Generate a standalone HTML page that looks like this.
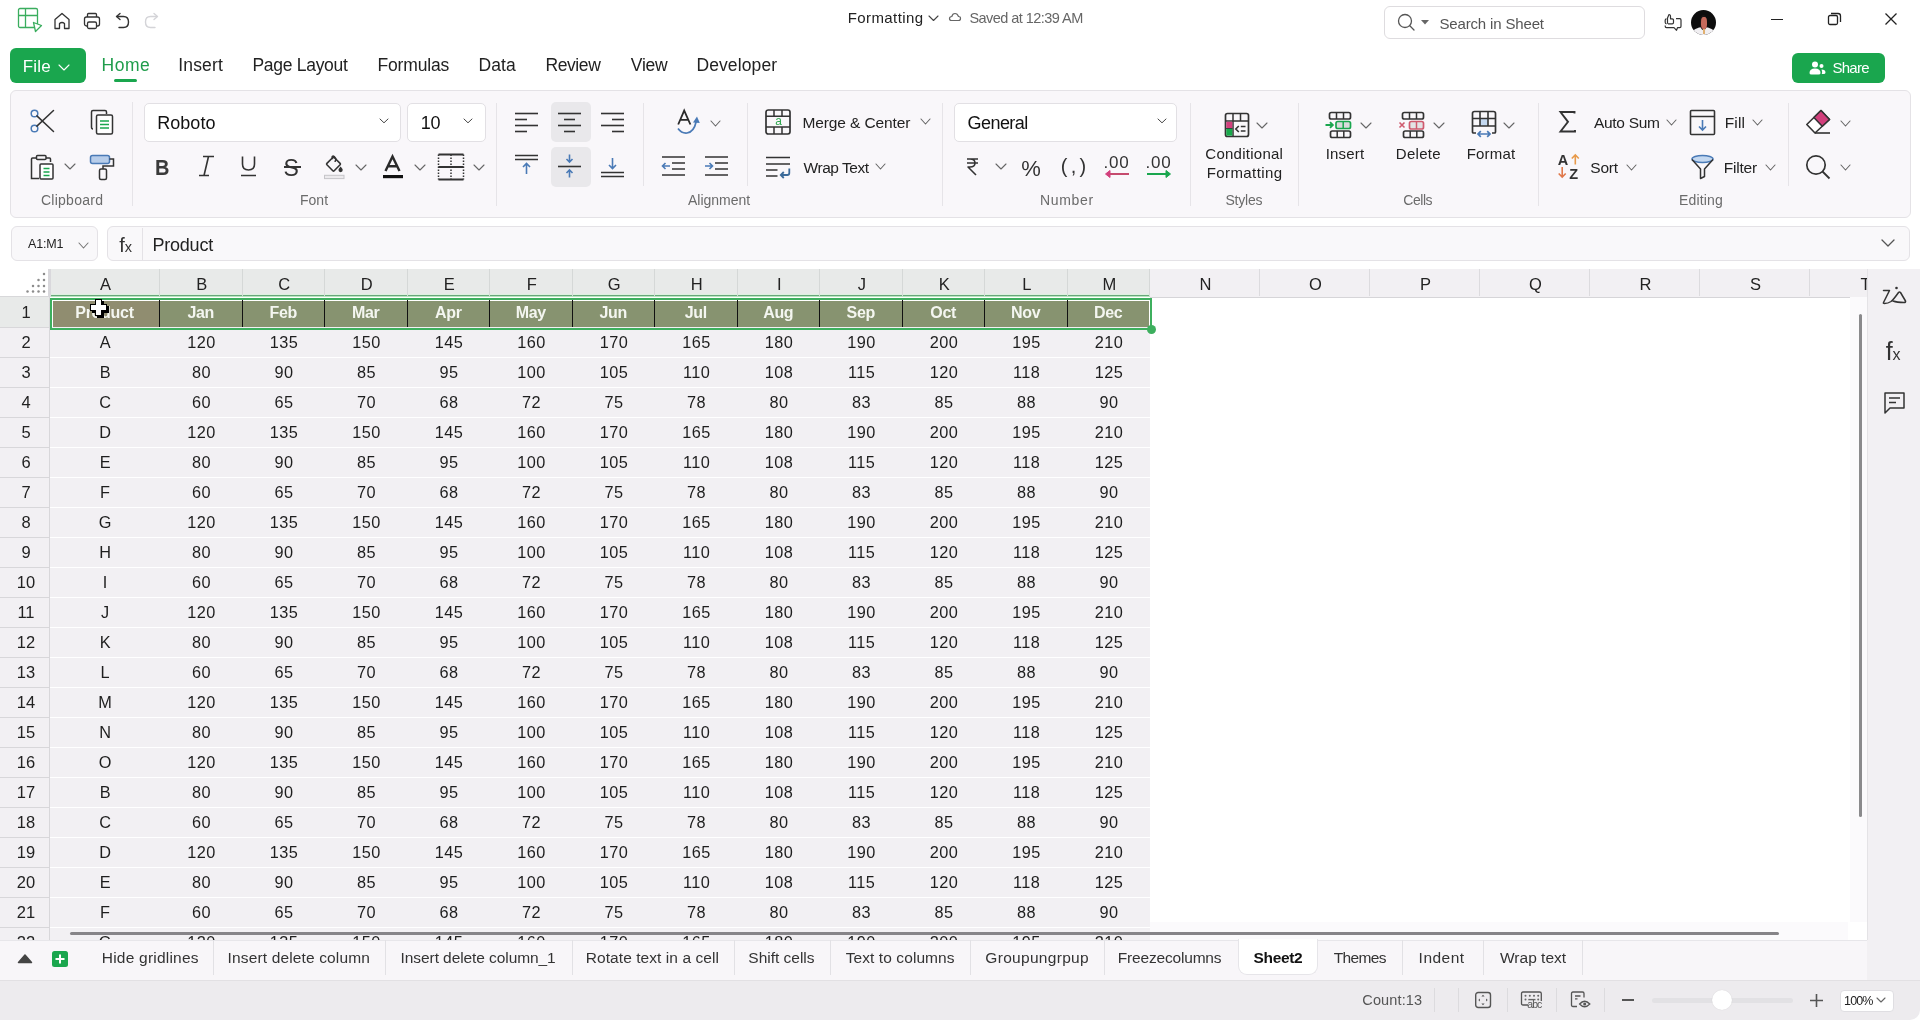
<!DOCTYPE html><html><head><meta charset="utf-8"><style>
html,body{margin:0;padding:0;}
body{width:1920px;height:1020px;overflow:hidden;position:relative;background:#fff;font-family:"Liberation Sans",sans-serif;}
.t{position:absolute;white-space:nowrap;line-height:normal;font-family:"Liberation Sans",sans-serif;}
svg{overflow:visible}
</style></head><body><div style="position:absolute;left:0;top:0;width:1920px;height:1020px;overflow:hidden;will-change:transform;background:#fff">

<svg style="position:absolute;left:17px;top:7px" width="26" height="26" viewBox="0 0 26 26" fill="none"><rect x="1.5" y="1.5" width="19" height="19" rx="1.5" stroke="#3aad5e" stroke-width="1.3"/>
<path d="M1.5 8.5 H20.5 M8.5 1.5 V20.5" stroke="#3aad5e" stroke-width="1.3"/>
<path d="M16.5 15.5 L24.5 18.5 L18.5 24.5 Z" fill="#fff" stroke="#3aad5e" stroke-width="1.3" stroke-linejoin="round"/></svg>
<svg style="position:absolute;left:53px;top:12px" width="18" height="18" viewBox="0 0 18 18" fill="none"><path d="M2 16.5 V7.5 L9 1.5 L16 7.5 V16.5 H11.5 V11.5 Q9 9.5 6.5 11.5 V16.5 Z" stroke="#333333" stroke-width="1.3" stroke-linejoin="round"/></svg>
<svg style="position:absolute;left:83px;top:12px" width="18" height="18" viewBox="0 0 18 18" fill="none"><path d="M4.5 5 V2.5 Q4.5 1.5 5.5 1.5 H12.5 Q13.5 1.5 13.5 2.5 V5" stroke="#333333" stroke-width="1.3"/><rect x="1.5" y="5" width="15" height="9" rx="2" stroke="#333333" stroke-width="1.3"/><rect x="4.5" y="10" width="9" height="6.5" rx="1.5" fill="#fff" stroke="#333333" stroke-width="1.3"/></svg>
<svg style="position:absolute;left:114px;top:12px" width="17" height="18" viewBox="0 0 17 18" fill="none"><path d="M3 4.5 H9.5 Q14.5 4.5 14.5 10 Q14.5 15.5 9.5 15.5 H5" stroke="#333333" stroke-width="1.4" stroke-linecap="round"/><path d="M6 1.5 L2.5 4.5 L6 7.5" stroke="#333333" stroke-width="1.4" stroke-linecap="round" stroke-linejoin="round"/></svg>
<svg style="position:absolute;left:143px;top:12px" width="17" height="18" viewBox="0 0 17 18" fill="none"><path d="M14 4.5 H7.5 Q2.5 4.5 2.5 10 Q2.5 15.5 7.5 15.5 H12" stroke="#d4d4d8" stroke-width="1.4" stroke-linecap="round"/><path d="M11 1.5 L14.5 4.5 L11 7.5" stroke="#d4d4d8" stroke-width="1.4" stroke-linecap="round" stroke-linejoin="round"/></svg>
<div class="t" style="left:847.80px;top:9.00px;font-size:15px;color:#222;letter-spacing:0.389px;">Formatting</div>
<svg style="position:absolute;left:928.0px;top:15.25px" width="11" height="6.5" viewBox="0 0 11 6.5" fill="none"><path d="M1 1 L5.5 5.5 L10 1" stroke="#444" stroke-width="1.1" stroke-linecap="round" stroke-linejoin="round"/></svg>
<svg style="position:absolute;left:948px;top:12px" width="14" height="10" viewBox="0 0 14 10" fill="none"><path d="M3.5 8.5 H10.5 Q12.5 8.5 12.5 6.5 Q12.5 4.5 10.5 4.5 Q9.5 1.5 7 1.5 Q4.5 1.5 3.8 4.5 Q1.5 4.7 1.5 6.5 Q1.5 8.5 3.5 8.5 Z" stroke="#666" stroke-width="1.2"/></svg>
<div class="t" style="left:969.40px;top:10.00px;font-size:14.5px;color:#666;letter-spacing:-0.544px;">Saved at 12:39 AM</div>
<div style="position:absolute;left:1383.5px;top:5.5px;width:261px;height:33px;box-sizing:border-box;border:1px solid #dedcdf;border-radius:6px;background:#fff"></div>
<svg style="position:absolute;left:1397px;top:13px" width="19" height="19" viewBox="0 0 19 19" fill="none"><circle cx="8" cy="8" r="6.5" stroke="#555" stroke-width="1.3"/><path d="M12.8 12.8 L17 17" stroke="#555" stroke-width="1.3" stroke-linecap="round"/></svg>
<svg style="position:absolute;left:1420px;top:19px" width="10" height="6" viewBox="0 0 10 6" fill="none"><path d="M1 1 H9 L5 5.5 Z" fill="#666"/></svg>
<div class="t" style="left:1439.40px;top:15.00px;font-size:15px;color:#555;letter-spacing:-0.150px;">Search in Sheet</div>
<svg style="position:absolute;left:1663px;top:12px" width="20" height="21" viewBox="0 0 20 21" fill="none"><path d="M3.5 6.8 Q2.2 6.8 2.2 8.3 V10.3 Q2.2 11.8 3.5 11.8 M5 11.8 H9.2 Q10.5 11.8 10.5 10.5 V8.2 Q10.5 6.8 9.2 6.8 H7.5 V4.5 Q7.5 2.5 6 2.5 L4.5 6 V11.8" stroke="#333333" stroke-width="1.2" stroke-linejoin="round"/><path d="M13 6.7 H16.8 Q18 6.7 18 8 V14.3 Q18 15.7 16.8 15.7 H14.5 L13.5 18.3 L11 15.7 H3.5 Q2.2 15.7 2.2 14.3 V13.5" stroke="#333333" stroke-width="1.2" stroke-linejoin="round"/></svg>
<div style="position:absolute;left:1691px;top:10px;width:25px;height:25px;border-radius:50%;background:#0d0d0d;overflow:hidden">
<div style="position:absolute;left:1px;top:17px;width:23px;height:14px;border-radius:50% 50% 0 0;background:#f1eff2"></div>
<div style="position:absolute;left:9px;top:5px;width:7px;height:15px;border-radius:45%;background:#1a1414"></div>
<div style="position:absolute;left:10px;top:7px;width:6px;height:12px;border-radius:40%;background:#c66a5c"></div>
<div style="position:absolute;left:11.5px;top:19px;width:2px;height:5px;background:#e0b070"></div>
</div>
<div style="position:absolute;left:1771px;top:19px;width:12px;height:1.3px;background:#222"></div>
<svg style="position:absolute;left:1827px;top:12px" width="15" height="15" viewBox="0 0 15 15" fill="none"><rect x="1.5" y="3.5" width="9" height="9" rx="1.5" stroke="#222" stroke-width="1.3"/><path d="M4 1.5 H11 Q13.5 1.5 13.5 4 V10" stroke="#222" stroke-width="1.3"/></svg>
<svg style="position:absolute;left:1884px;top:12px" width="14" height="14" viewBox="0 0 14 14" fill="none"><path d="M1.5 1.5 L12.5 12.5 M12.5 1.5 L1.5 12.5" stroke="#222" stroke-width="1.3"/></svg>
<div style="position:absolute;left:10px;top:48px;width:76px;height:35px;background:#1aa64e;border-radius:6px"></div>
<div class="t" style="left:22.70px;top:57.00px;font-size:17px;color:#fff;letter-spacing:0.233px;">File</div>
<svg style="position:absolute;left:57.5px;top:63.5px" width="12" height="7" viewBox="0 0 12 7" fill="none"><path d="M1 1 L6.0 6 L11 1" stroke="#fff" stroke-width="1.1" stroke-linecap="round" stroke-linejoin="round"/></svg>
<div class="t" style="left:101.60px;top:55.00px;font-size:17.5px;color:#1f9d4b;letter-spacing:0.500px;">Home</div>
<div style="position:absolute;left:114px;top:79px;width:23px;height:3px;background:#1aa64e;border-radius:2px"></div>
<div class="t" style="left:178.20px;top:55.00px;font-size:17.5px;color:#222;letter-spacing:0.180px;">Insert</div>
<div class="t" style="left:252.40px;top:55.00px;font-size:17.5px;color:#222;letter-spacing:-0.280px;">Page Layout</div>
<div class="t" style="left:377.40px;top:55.00px;font-size:17.5px;color:#222;letter-spacing:-0.143px;">Formulas</div>
<div class="t" style="left:478.40px;top:55.00px;font-size:17.5px;color:#222;letter-spacing:0.133px;">Data</div>
<div class="t" style="left:545.40px;top:55.00px;font-size:17.5px;color:#222;letter-spacing:-0.400px;">Review</div>
<div class="t" style="left:630.80px;top:55.00px;font-size:17.5px;color:#222;letter-spacing:-0.233px;">View</div>
<div class="t" style="left:696.40px;top:55.00px;font-size:17.5px;color:#222;letter-spacing:0.113px;">Developer</div>
<div style="position:absolute;left:1792px;top:53px;width:93px;height:30px;background:#1aa64e;border-radius:6px"></div>
<svg style="position:absolute;left:1809px;top:61px" width="18" height="15" viewBox="0 0 18 15" fill="none"><circle cx="6" cy="3.5" r="3" fill="#fff"/><path d="M0.5 12 Q0.5 7.5 6 7.5 Q11.5 7.5 11.5 12 Q11.5 13.5 9.5 13.5 H2.5 Q0.5 13.5 0.5 12 Z" fill="#fff"/><circle cx="12.5" cy="5" r="2" fill="#fff"/><path d="M12.5 8.5 Q16.5 8.5 16.5 11.5 Q16.5 13 14.5 13 H12.8 Q13.5 10.5 12.5 8.5 Z" fill="#fff"/></svg>
<div class="t" style="left:1832.40px;top:59.00px;font-size:15px;color:#fff;letter-spacing:-0.700px;">Share</div>
<div style="position:absolute;left:9.5px;top:90px;width:1901px;height:127.5px;box-sizing:border-box;border:1px solid #e4e2e6;border-radius:6px;background:#f9f7fa"></div>
<div style="position:absolute;left:132px;top:102px;width:1px;height:104px;background:#e6e4e8"></div>
<div style="position:absolute;left:496px;top:103px;width:1px;height:103px;background:#e6e4e8"></div>
<div style="position:absolute;left:643px;top:103px;width:1px;height:83px;background:#e6e4e8"></div>
<div style="position:absolute;left:747px;top:103px;width:1px;height:83px;background:#e6e4e8"></div>
<div style="position:absolute;left:942px;top:103px;width:1px;height:103px;background:#e6e4e8"></div>
<div style="position:absolute;left:1190px;top:103px;width:1px;height:103px;background:#e6e4e8"></div>
<div style="position:absolute;left:1298px;top:103px;width:1px;height:103px;background:#e6e4e8"></div>
<div style="position:absolute;left:1538px;top:103px;width:1px;height:103px;background:#e6e4e8"></div>
<div style="position:absolute;left:1788px;top:103px;width:1px;height:83px;background:#e6e4e8"></div>
<div class="t" style="left:41.00px;top:192.00px;font-size:14px;color:#6b6b6b;letter-spacing:0.250px;">Clipboard</div>
<div class="t" style="left:299.90px;top:192.00px;font-size:14px;color:#6b6b6b;letter-spacing:0.067px;">Font</div>
<div class="t" style="left:688.00px;top:192.00px;font-size:14px;color:#6b6b6b;letter-spacing:-0.025px;">Alignment</div>
<div class="t" style="left:1039.90px;top:192.00px;font-size:14px;color:#6b6b6b;letter-spacing:0.700px;">Number</div>
<div class="t" style="left:1225.40px;top:192.00px;font-size:14px;color:#6b6b6b;letter-spacing:-0.200px;">Styles</div>
<div class="t" style="left:1403.30px;top:192.00px;font-size:14px;color:#6b6b6b;letter-spacing:-0.475px;">Cells</div>
<div class="t" style="left:1678.90px;top:192.00px;font-size:14px;color:#6b6b6b;letter-spacing:0.200px;">Editing</div>
<svg style="position:absolute;left:29px;top:108px" width="26" height="26" viewBox="0 0 26 26" fill="none"><circle cx="5.5" cy="5.5" r="3.3" stroke="#4a7ab6" stroke-width="1.5"/><circle cx="5.5" cy="20.5" r="3.3" stroke="#4a7ab6" stroke-width="1.5"/>
<path d="M7.9 7.9 L24.5 23.5 M7.9 18.1 L24.5 2.5" stroke="#333333" stroke-width="1.5" stroke-linecap="round"/></svg>
<svg style="position:absolute;left:90px;top:109px" width="25" height="27" viewBox="0 0 25 27" fill="none"><path d="M3 20 Q1.5 20 1.5 18 V3 Q1.5 1.5 3 1.5 H15 Q16.5 1.5 16.5 3 V5" stroke="#333333" stroke-width="1.5"/>
<rect x="6.5" y="6" width="16" height="19" rx="1.5" fill="#fff" stroke="#333333" stroke-width="1.5"/>
<path d="M10 12 H19 M10 15.5 H19 M10 19 H19" stroke="#1aa64e" stroke-width="1.5"/></svg>
<svg style="position:absolute;left:30px;top:154px" width="26" height="27" viewBox="0 0 26 27" fill="none"><path d="M7 4 H2.5 Q1.5 4 1.5 5 V24.5 H9 M16 4 H19.5 Q20.5 4 20.5 5 V8" stroke="#333333" stroke-width="1.5"/>
<rect x="6.5" y="1.5" width="9.5" height="4" rx="1" stroke="#333333" stroke-width="1.5"/>
<rect x="10" y="10" width="13" height="15" rx="1" fill="#fff" stroke="#333333" stroke-width="1.5"/>
<path d="M13.5 14.5 H19.5 M13.5 18 H19.5 M13.5 21.5 H19.5" stroke="#1aa64e" stroke-width="1.5"/></svg>
<svg style="position:absolute;left:64.0px;top:163.0px" width="12" height="7" viewBox="0 0 12 7" fill="none"><path d="M1 1 L6.0 6 L11 1" stroke="#666" stroke-width="1.1" stroke-linecap="round" stroke-linejoin="round"/></svg>
<svg style="position:absolute;left:89px;top:154px" width="27" height="27" viewBox="0 0 27 27" fill="none"><rect x="1.5" y="1.5" width="19" height="8" rx="2" fill="#b7cdea" stroke="#4a7ab6" stroke-width="1.5"/>
<path d="M20.5 5 H24.5 V12 H14 V15" stroke="#333333" stroke-width="1.5"/>
<rect x="10.5" y="15" width="7" height="10.5" rx="1.5" stroke="#333333" stroke-width="1.5"/></svg>
<div style="position:absolute;left:143.5px;top:102.5px;width:257px;height:39px;box-sizing:border-box;border:1px solid #e2e0e4;border-radius:5px;background:#fff"></div>
<div class="t" style="left:157.20px;top:113.30px;font-size:18px;color:#111;letter-spacing:0.040px;">Roboto</div>
<svg style="position:absolute;left:379.0px;top:118.3px" width="10" height="5.8" viewBox="0 0 10 5.8" fill="none"><path d="M1 1 L5.0 4.8 L9 1" stroke="#444" stroke-width="1.0" stroke-linecap="round" stroke-linejoin="round"/></svg>
<div style="position:absolute;left:406.5px;top:102.5px;width:79px;height:39px;box-sizing:border-box;border:1px solid #e2e0e4;border-radius:5px;background:#fff"></div>
<div class="t" style="left:420.70px;top:113.30px;font-size:18px;color:#111;letter-spacing:-0.100px;">10</div>
<svg style="position:absolute;left:463.0px;top:118.3px" width="10" height="5.8" viewBox="0 0 10 5.8" fill="none"><path d="M1 1 L5.0 4.8 L9 1" stroke="#444" stroke-width="1.0" stroke-linecap="round" stroke-linejoin="round"/></svg>
<div class="t" style="left:154.60px;top:155.50px;font-size:21.5px;color:#3a3a3a;letter-spacing:0.000px;font-weight:700;transform:scaleX(0.93);transform-origin:0 0;">B</div>
<svg style="position:absolute;left:196px;top:155px" width="21" height="22" viewBox="0 0 21 22" fill="none"><path d="M7 1.5 H18 M3 20.5 H13 M12.5 1.5 L8 20.5" stroke="#333333" stroke-width="1.6"/></svg>
<svg style="position:absolute;left:239px;top:155px" width="21" height="22" viewBox="0 0 21 22" fill="none"><path d="M3.5 1.5 V9 Q3.5 15 9.5 15 Q15.5 15 15.5 9 V1.5 M2 20.5 H17" stroke="#333333" stroke-width="1.6"/></svg>
<div class="t" style="left:283.50px;top:154.50px;font-size:23px;color:#333333;letter-spacing:0.000px;">S</div>
<div style="position:absolute;left:284px;top:166.3px;width:17px;height:1.6px;background:#333333"></div>
<svg style="position:absolute;left:323px;top:152px" width="23" height="28" viewBox="0 0 23 28" fill="none"><path d="M9.8 5.5 Q10.5 4.8 11.2 5.5 L17.1 11.4 Q17.8 12.1 17.1 12.8 L11.2 18.7 Q10.5 19.4 9.8 18.7 L3.9 12.8 Q3.2 12.1 3.9 11.4 Z" stroke="#333333" stroke-width="1.6" stroke-linejoin="round"/>
<path d="M9.6 6.4 Q8.6 4.2 10.2 4 Q11.2 3.9 12.6 6.4 Q13.4 8.4 12.2 9.2" stroke="#333333" stroke-width="1.7" stroke-linecap="round"/>
<path d="M17.6 14.6 Q19.7 17 19.7 18.1 A2.1 2.1 0 0 1 15.5 18.1 Q15.5 17 17.6 14.6 Z" fill="#333333"/>
<rect x="1.5" y="23.3" width="19.5" height="3.3" fill="#eceaed" stroke="#c6c5c9" stroke-width="1"/></svg>
<svg style="position:absolute;left:355.0px;top:163.5px" width="12" height="7" viewBox="0 0 12 7" fill="none"><path d="M1 1 L6.0 6 L11 1" stroke="#666" stroke-width="1.1" stroke-linecap="round" stroke-linejoin="round"/></svg>
<svg style="position:absolute;left:382px;top:151px" width="22" height="29" viewBox="0 0 22 29" fill="none"><path d="M3.5 20 L10.5 5.5 L17.5 20 M6.2 15.3 H14.8" stroke="#2a2a2a" stroke-width="2.4"/><rect x="1" y="24" width="20" height="3.2" fill="#111"/></svg>
<svg style="position:absolute;left:414.0px;top:163.5px" width="12" height="7" viewBox="0 0 12 7" fill="none"><path d="M1 1 L6.0 6 L11 1" stroke="#666" stroke-width="1.1" stroke-linecap="round" stroke-linejoin="round"/></svg>
<svg style="position:absolute;left:437px;top:153px" width="28" height="28" viewBox="0 0 28 28" fill="none"><path d="M1.5 1.5 H26.5 M1.5 14 H26.5 M1.5 26.5 H26.5" stroke="#333333" stroke-width="1.8"/>
<path d="M1.5 1.5 V26.5 M14 1.5 V26.5 M26.5 1.5 V26.5" stroke="#333333" stroke-width="1.5" stroke-dasharray="1.5 1.5"/></svg>
<svg style="position:absolute;left:473.0px;top:163.5px" width="12" height="7" viewBox="0 0 12 7" fill="none"><path d="M1 1 L6.0 6 L11 1" stroke="#666" stroke-width="1.1" stroke-linecap="round" stroke-linejoin="round"/></svg>
<div style="position:absolute;left:550.5px;top:102px;width:40px;height:40px;background:#e9e8eb;border-radius:5px"></div>
<div style="position:absolute;left:550.5px;top:147px;width:40px;height:40px;background:#e9e8eb;border-radius:5px"></div>
<svg style="position:absolute;left:513px;top:109px" width="26" height="24" viewBox="0 0 26 24" fill="none"><path d="M2 4.5 H25" stroke="#333333" stroke-width="1.6"/><path d="M2 10.5 H14" stroke="#333333" stroke-width="1.6"/><path d="M2 16.5 H25" stroke="#333333" stroke-width="1.6"/><path d="M2 22.5 H14" stroke="#333333" stroke-width="1.6"/></svg>
<svg style="position:absolute;left:556px;top:109px" width="26" height="24" viewBox="0 0 26 24" fill="none"><path d="M2 4.5 H25" stroke="#333333" stroke-width="1.6"/><path d="M8 10.5 H19" stroke="#333333" stroke-width="1.6"/><path d="M2 16.5 H25" stroke="#333333" stroke-width="1.6"/><path d="M8 22.5 H19" stroke="#333333" stroke-width="1.6"/></svg>
<svg style="position:absolute;left:599px;top:109px" width="26" height="24" viewBox="0 0 26 24" fill="none"><path d="M2 4.5 H25" stroke="#333333" stroke-width="1.6"/><path d="M13 10.5 H25" stroke="#333333" stroke-width="1.6"/><path d="M2 16.5 H25" stroke="#333333" stroke-width="1.6"/><path d="M13 22.5 H25" stroke="#333333" stroke-width="1.6"/></svg>
<svg style="position:absolute;left:513px;top:153px" width="26" height="26" viewBox="0 0 26 26" fill="none"><path d="M2 2.5 H25 M2 6.5 H25" stroke="#333333" stroke-width="1.6"/><path d="M13.5 21 V10.5 M10 14 L13.5 10.5 L17 14" stroke="#4a7ab6" stroke-width="1.6"/></svg>
<svg style="position:absolute;left:556px;top:153px" width="26" height="26" viewBox="0 0 26 26" fill="none"><path d="M2 13.5 H25" stroke="#333333" stroke-width="1.6"/><path d="M13.5 1.5 V9 M10.5 6 L13.5 9 L16.5 6 M13.5 24.5 V17 M10.5 20 L13.5 17 L16.5 20" stroke="#4a7ab6" stroke-width="1.6"/></svg>
<svg style="position:absolute;left:599px;top:153px" width="26" height="28" viewBox="0 0 26 28" fill="none"><path d="M2 19.5 H25 M2 23.5 H25" stroke="#333333" stroke-width="1.6"/><path d="M13.5 5 V15.5 M10 12 L13.5 15.5 L17 12" stroke="#4a7ab6" stroke-width="1.6"/></svg>
<svg style="position:absolute;left:675px;top:108px" width="26" height="28" viewBox="0 0 26 28" fill="none"><path d="M3.2 16.5 L9.2 2.6 L15.4 16.5 M5.2 11.8 H13.2" stroke="#2a2a2a" stroke-width="1.8"/><path d="M3 20.5 Q6.5 25.5 12 25 Q19 24 21.2 13.5" stroke="#4a7ab6" stroke-width="1.7" fill="none"/><path d="M18 14.5 L22 8.5 L24.8 15 Z" fill="#4a7ab6"/></svg>
<svg style="position:absolute;left:710.0px;top:119.5px" width="11" height="7" viewBox="0 0 11 7" fill="none"><path d="M1 1 L5.5 6 L10 1" stroke="#666" stroke-width="1.1" stroke-linecap="round" stroke-linejoin="round"/></svg>
<svg style="position:absolute;left:660px;top:155px" width="27" height="24" viewBox="0 0 27 24" fill="none"><path d="M2 2 H25 M12 8 H25 M12 14 H25 M2 20 H25" stroke="#333333" stroke-width="1.6"/><path d="M10 11 H2.5 M5.5 8 L2.5 11 L5.5 14" stroke="#4a7ab6" stroke-width="1.6"/></svg>
<svg style="position:absolute;left:703px;top:155px" width="27" height="24" viewBox="0 0 27 24" fill="none"><path d="M2 2 H25 M12 8 H25 M12 14 H25 M2 20 H25" stroke="#333333" stroke-width="1.6"/><path d="M2 11 H9.5 M6.5 8 L9.5 11 L6.5 14" stroke="#4a7ab6" stroke-width="1.6"/></svg>
<svg style="position:absolute;left:764px;top:108px" width="28" height="28" viewBox="0 0 28 28" fill="none"><rect x="2" y="2" width="24" height="24" rx="2.2" stroke="#333333" stroke-width="1.7"/>
<path d="M2 8.3 H26 M2 19 H26 M10 2 V8.3 M18 2 V8.3 M10 19 V26 M18 19 V26" stroke="#333333" stroke-width="1.5"/></svg>
<div class="t" style="left:775.30px;top:114.00px;font-size:12px;color:#2fa64f;letter-spacing:0.000px;">a</div>
<div class="t" style="left:802.40px;top:114.00px;font-size:15.5px;color:#222;letter-spacing:-0.100px;">Merge &amp; Center</div>
<svg style="position:absolute;left:919.5px;top:118.0px" width="11" height="7" viewBox="0 0 11 7" fill="none"><path d="M1 1 L5.5 6 L10 1" stroke="#666" stroke-width="1.1" stroke-linecap="round" stroke-linejoin="round"/></svg>
<svg style="position:absolute;left:764px;top:155px" width="28" height="24" viewBox="0 0 28 24" fill="none"><path d="M2 2.5 H26 M2 9 H26 M2 15 H13.5 M2 21 H13.5" stroke="#333333" stroke-width="1.6"/><path d="M25.3 13.5 V18 Q25.3 20 23.3 20 H17 M19.8 17 L16.8 20 L19.8 23" stroke="#3b6a99" stroke-width="1.8"/></svg>
<div class="t" style="left:803.60px;top:158.80px;font-size:15.5px;color:#222;letter-spacing:-0.463px;">Wrap Text</div>
<svg style="position:absolute;left:874.5px;top:163.0px" width="11" height="7" viewBox="0 0 11 7" fill="none"><path d="M1 1 L5.5 6 L10 1" stroke="#666" stroke-width="1.1" stroke-linecap="round" stroke-linejoin="round"/></svg>
<div style="position:absolute;left:953.8px;top:102.5px;width:223.4px;height:39px;box-sizing:border-box;border:1px solid #e2e0e4;border-radius:5px;background:#fff"></div>
<div class="t" style="left:967.60px;top:112.90px;font-size:18px;color:#111;letter-spacing:-0.567px;">General</div>
<svg style="position:absolute;left:1156.5px;top:118.3px" width="10" height="5.8" viewBox="0 0 10 5.8" fill="none"><path d="M1 1 L5.0 4.8 L9 1" stroke="#444" stroke-width="1.0" stroke-linecap="round" stroke-linejoin="round"/></svg>
<svg style="position:absolute;left:965px;top:157px" width="15" height="20" viewBox="0 0 15 20" fill="none"><path d="M2 2 H13 M2 6 H13 M5 2 Q10 2 10 6 Q10 10 5 10 H3 L11 18" stroke="#333333" stroke-width="1.6" stroke-linejoin="round"/></svg>
<svg style="position:absolute;left:995.0px;top:163.0px" width="12" height="7" viewBox="0 0 12 7" fill="none"><path d="M1 1 L6.0 6 L11 1" stroke="#666" stroke-width="1.1" stroke-linecap="round" stroke-linejoin="round"/></svg>
<div class="t" style="left:1021.30px;top:155.50px;font-size:22px;color:#333;letter-spacing:0.000px;">%</div>
<div class="t" style="left:1060.80px;top:155.00px;font-size:20px;color:#333;letter-spacing:3.250px;">(,)</div>
<div class="t" style="left:1103.50px;top:152.50px;font-size:17px;color:#333;letter-spacing:0.750px;">.00</div>
<svg style="position:absolute;left:1104px;top:170px" width="26" height="8" viewBox="0 0 26 8" fill="none"><path d="M25 4 H4" stroke="#c54a6d" stroke-width="2"/><path d="M6 0.5 L1.5 4 L6 7.5 Z" fill="#d23f7c" stroke="#d23f7c" stroke-width="1" stroke-linejoin="round"/></svg>
<div class="t" style="left:1145.50px;top:152.50px;font-size:17px;color:#333;letter-spacing:0.750px;">.00</div>
<svg style="position:absolute;left:1146px;top:170px" width="26" height="8" viewBox="0 0 26 8" fill="none"><path d="M1 4 H22" stroke="#1aa64e" stroke-width="2"/><path d="M20 0.5 L24.5 4 L20 7.5 Z" fill="#1aa64e" stroke="#1aa64e" stroke-width="1" stroke-linejoin="round"/></svg>
<svg style="position:absolute;left:1224px;top:112px" width="27" height="27" viewBox="0 0 27 27" fill="none"><rect x="1.5" y="1.5" width="23" height="23" rx="2" stroke="#333333" stroke-width="1.7"/>
<path d="M1.5 9 H24.5 M9 1.5 V24.5 M16.5 1.5 V9" stroke="#333333" stroke-width="1.5"/>
<rect x="2.3" y="9.8" width="6" height="6.2" fill="#d23f7c"/><rect x="2.3" y="17" width="6" height="6.7" fill="#18a84a"/><path d="M2 16.5 H8.5" stroke="#2c4a3c" stroke-width="1"/>
<path d="M14.8 14 L11.8 17 L14.8 20" stroke="#333333" stroke-width="1.6"/><path d="M16.8 14.5 H21.5 M16.8 19 H21.5" stroke="#333333" stroke-width="1.7"/></svg>
<svg style="position:absolute;left:1256.0px;top:121.5px" width="12" height="7" viewBox="0 0 12 7" fill="none"><path d="M1 1 L6.0 6 L11 1" stroke="#666" stroke-width="1.1" stroke-linecap="round" stroke-linejoin="round"/></svg>
<div class="t" style="left:1205.30px;top:144.80px;font-size:15px;color:#222;letter-spacing:0.260px;">Conditional</div>
<div class="t" style="left:1206.80px;top:164.40px;font-size:15px;color:#222;letter-spacing:0.389px;">Formatting</div>
<svg style="position:absolute;left:1323px;top:111px" width="30" height="28" viewBox="0 0 30 28" fill="none"><rect x="6.5" y="1.5" width="21" height="6.5" rx="1.8" stroke="#333333" stroke-width="1.7"/><path d="M13.5 1.5 V8 M20.5 1.5 V8" stroke="#333333" stroke-width="1.5"/>
<rect x="13" y="10.5" width="14.5" height="7" rx="1.8" fill="#d9dadc" stroke="#1aa64e" stroke-width="1.7"/><path d="M20.2 10.5 V17.5" stroke="#1aa64e" stroke-width="1.5"/>
<path d="M2.5 14 H9.5 M7 11.2 L9.8 14 L7 16.8" stroke="#1aa64e" stroke-width="1.9"/>
<rect x="7.5" y="20" width="20" height="6.5" rx="1.8" stroke="#333333" stroke-width="1.7"/><path d="M14.2 20 V26.5 M20.8 20 V26.5" stroke="#333333" stroke-width="1.5"/></svg>
<svg style="position:absolute;left:1360.0px;top:121.5px" width="12" height="7" viewBox="0 0 12 7" fill="none"><path d="M1 1 L6.0 6 L11 1" stroke="#666" stroke-width="1.1" stroke-linecap="round" stroke-linejoin="round"/></svg>
<div class="t" style="left:1325.70px;top:144.50px;font-size:15px;color:#222;letter-spacing:0.180px;">Insert</div>
<svg style="position:absolute;left:1397px;top:111px" width="30" height="28" viewBox="0 0 30 28" fill="none"><rect x="5.5" y="1.5" width="21" height="6.5" rx="1.8" stroke="#333333" stroke-width="1.7"/><path d="M12.5 1.5 V8 M19.5 1.5 V8" stroke="#333333" stroke-width="1.5"/>
<rect x="12.5" y="10.5" width="14" height="7.5" rx="1.8" fill="#e3e3e5" stroke="#cf5a6e" stroke-width="1.7"/><path d="M19.5 10.5 V18" stroke="#cf5a6e" stroke-width="1.5"/>
<path d="M2.5 11.5 L7.5 16.5 M7.5 11.5 L2.5 16.5" stroke="#cf5a6e" stroke-width="1.6"/>
<rect x="6.5" y="20" width="20" height="6.5" rx="1.8" stroke="#333333" stroke-width="1.7"/><path d="M13.2 20 V26.5 M19.8 20 V26.5" stroke="#333333" stroke-width="1.5"/></svg>
<svg style="position:absolute;left:1433.0px;top:121.5px" width="12" height="7" viewBox="0 0 12 7" fill="none"><path d="M1 1 L6.0 6 L11 1" stroke="#666" stroke-width="1.1" stroke-linecap="round" stroke-linejoin="round"/></svg>
<div class="t" style="left:1395.80px;top:144.50px;font-size:15px;color:#222;letter-spacing:0.300px;">Delete</div>
<svg style="position:absolute;left:1471px;top:110px" width="27" height="28" viewBox="0 0 27 28" fill="none"><path d="M5 23 H2.5 Q1.5 23 1.5 22 V3.5 Q1.5 1.5 3.5 1.5 H22.5 Q24.5 1.5 24.5 3.5 V22 Q24.5 23 23.5 23 H21" stroke="#333333" stroke-width="1.7"/>
<rect x="9" y="8.5" width="8" height="7.5" fill="#c4d8f0"/>
<path d="M1.5 8.5 H24.5 M1.5 16 H24.5 M9 1.5 V16 M17 1.5 V16" stroke="#333333" stroke-width="1.6"/>
<path d="M7 24 H19 M9.8 21.2 L7 24 L9.8 26.8 M16.2 21.2 L19 24 L16.2 26.8" stroke="#4a7ab6" stroke-width="1.7"/></svg>
<svg style="position:absolute;left:1503.0px;top:121.5px" width="12" height="7" viewBox="0 0 12 7" fill="none"><path d="M1 1 L6.0 6 L11 1" stroke="#666" stroke-width="1.1" stroke-linecap="round" stroke-linejoin="round"/></svg>
<div class="t" style="left:1466.80px;top:144.50px;font-size:15px;color:#222;letter-spacing:0.160px;">Format</div>
<svg style="position:absolute;left:1558px;top:110px" width="20" height="24" viewBox="0 0 20 24" fill="none"><path d="M16.5 3.5 V2 H2.5 L10 11.8 L2.5 21.5 H17 V20" stroke="#333333" stroke-width="1.9" stroke-linejoin="miter"/></svg>
<div class="t" style="left:1594.00px;top:114.00px;font-size:15.5px;color:#222;letter-spacing:-0.300px;">Auto Sum</div>
<svg style="position:absolute;left:1666.0px;top:118.5px" width="11" height="7" viewBox="0 0 11 7" fill="none"><path d="M1 1 L5.5 6 L10 1" stroke="#666" stroke-width="1.1" stroke-linecap="round" stroke-linejoin="round"/></svg>
<svg style="position:absolute;left:1689px;top:109px" width="27" height="27" viewBox="0 0 27 27" fill="none"><rect x="1.5" y="1.5" width="24" height="24" rx="1" stroke="#333333" stroke-width="1.6"/><path d="M1.5 7.5 H25.5" stroke="#333333" stroke-width="1.5"/><path d="M13.5 11 V21 M10 17.5 L13.5 21 L17 17.5" stroke="#4a7ab6" stroke-width="1.6"/></svg>
<div class="t" style="left:1724.80px;top:114.00px;font-size:15.5px;color:#222;letter-spacing:0.100px;">Fill</div>
<svg style="position:absolute;left:1752.0px;top:118.5px" width="11" height="7" viewBox="0 0 11 7" fill="none"><path d="M1 1 L5.5 6 L10 1" stroke="#666" stroke-width="1.1" stroke-linecap="round" stroke-linejoin="round"/></svg>
<div class="t" style="left:1557.70px;top:152.30px;font-size:14.5px;color:#333;letter-spacing:0.000px;font-weight:700;">A</div>
<div class="t" style="left:1569.20px;top:166.10px;font-size:14.5px;color:#333;letter-spacing:0.000px;font-weight:700;">Z</div>
<svg style="position:absolute;left:1570px;top:153px" width="12" height="13" viewBox="0 0 12 13" fill="none"><path d="M5.3 11.5 V2 M1.8 5.5 L5.3 2 L8.8 5.5" stroke="#e89a4a" stroke-width="1.6"/></svg>
<svg style="position:absolute;left:1557px;top:166px" width="12" height="13" viewBox="0 0 12 13" fill="none"><path d="M5.2 1 V11 M1.7 7.5 L5.2 11 L8.7 7.5" stroke="#e0784a" stroke-width="1.6"/></svg>
<div class="t" style="left:1590.30px;top:159.00px;font-size:15.5px;color:#222;letter-spacing:-0.200px;">Sort</div>
<svg style="position:absolute;left:1625.5px;top:163.5px" width="11" height="7" viewBox="0 0 11 7" fill="none"><path d="M1 1 L5.5 6 L10 1" stroke="#666" stroke-width="1.1" stroke-linecap="round" stroke-linejoin="round"/></svg>
<svg style="position:absolute;left:1690px;top:154px" width="26" height="27" viewBox="0 0 26 27" fill="none"><ellipse cx="12.5" cy="5" rx="10.5" ry="3.5" fill="#c4d8f0" stroke="#4a7ab6" stroke-width="1.5"/><path d="M2 5.5 L10.5 15 V24.5 L14.5 22.5 V15 L23 5.5" stroke="#333333" stroke-width="1.5" stroke-linejoin="round"/></svg>
<div class="t" style="left:1723.80px;top:159.00px;font-size:15.5px;color:#222;letter-spacing:-0.220px;">Filter</div>
<svg style="position:absolute;left:1764.5px;top:163.5px" width="11" height="7" viewBox="0 0 11 7" fill="none"><path d="M1 1 L5.5 6 L10 1" stroke="#666" stroke-width="1.1" stroke-linecap="round" stroke-linejoin="round"/></svg>
<svg style="position:absolute;left:1805px;top:109px" width="27" height="27" viewBox="0 0 27 27" fill="none"><path d="M16 1.5 L24.5 10.5 L10 24 L1.8 15.5 Z" fill="#fff" stroke="#333333" stroke-width="1.6" stroke-linejoin="round"/><path d="M16 1.5 L24.5 10.5 L17.25 17.25 L8.9 8.5 Z" fill="#d23f7c" stroke="#333333" stroke-width="1.6" stroke-linejoin="round"/><path d="M10 24 H25" stroke="#333333" stroke-width="1.6"/></svg>
<svg style="position:absolute;left:1839.5px;top:119.5px" width="11" height="7" viewBox="0 0 11 7" fill="none"><path d="M1 1 L5.5 6 L10 1" stroke="#666" stroke-width="1.1" stroke-linecap="round" stroke-linejoin="round"/></svg>
<svg style="position:absolute;left:1805px;top:154px" width="27" height="27" viewBox="0 0 27 27" fill="none"><circle cx="11" cy="11" r="9.2" stroke="#333333" stroke-width="1.7"/><path d="M17.5 17.5 L24.5 24.5" stroke="#333333" stroke-width="1.8"/></svg>
<svg style="position:absolute;left:1839.5px;top:163.5px" width="11" height="7" viewBox="0 0 11 7" fill="none"><path d="M1 1 L5.5 6 L10 1" stroke="#666" stroke-width="1.1" stroke-linecap="round" stroke-linejoin="round"/></svg>
<div style="position:absolute;left:10.5px;top:225.5px;width:87px;height:35px;box-sizing:border-box;border:1px solid #e4e2e6;border-radius:6px;background:#f9f8fa"></div>
<div class="t" style="left:28.00px;top:237.00px;font-size:12.5px;color:#222;letter-spacing:-0.150px;">A1:M1</div>
<svg style="position:absolute;left:78.0px;top:241.5px" width="11" height="7" viewBox="0 0 11 7" fill="none"><path d="M1 1 L5.5 6 L10 1" stroke="#777" stroke-width="1.1" stroke-linecap="round" stroke-linejoin="round"/></svg>
<div style="position:absolute;left:107px;top:225.5px;width:1803px;height:35px;box-sizing:border-box;border:1px solid #e4e2e6;border-radius:6px;background:#f9f8fa"></div>
<div style="position:absolute;left:142px;top:227.5px;width:1px;height:32px;background:#e4e2e6"></div>
<div class="t" style="left:119.20px;top:234.00px;font-size:20px;color:#333;letter-spacing:0.000px;">f</div>
<div class="t" style="left:124.70px;top:239.00px;font-size:14.5px;color:#333;letter-spacing:0.000px;">x</div>
<div class="t" style="left:152.60px;top:235.00px;font-size:18px;color:#222;letter-spacing:-0.250px;">Product</div>
<svg style="position:absolute;left:1880.5px;top:239.0px" width="14" height="8" viewBox="0 0 14 8" fill="none"><path d="M1 1 L7.0 7 L13 1" stroke="#555" stroke-width="1.3" stroke-linecap="round" stroke-linejoin="round"/></svg>
<div style="position:absolute;left:0px;top:269px;width:1867px;height:671px;background:#fff"></div>
<div style="position:absolute;left:49.5px;top:297px;width:1100px;height:643px;background:#f2f0f3"></div>
<div style="position:absolute;left:49.5px;top:269px;width:1100px;height:28px;background:#e8eae9"></div>
<div style="position:absolute;left:1149.5px;top:269px;width:717.5px;height:28px;background:#f2f0f3"></div>
<div style="position:absolute;left:1149.5px;top:297px;width:717.5px;height:1px;background:#d6d5d8"></div>
<div style="position:absolute;left:49.5px;top:294px;width:1100px;height:1px;background:#dcf3df"></div>
<div style="position:absolute;left:49.5px;top:295px;width:1100px;height:1px;background:#6aa57c"></div>
<div style="position:absolute;left:49.5px;top:296px;width:1100px;height:1px;background:#b5e6bd"></div>
<div style="position:absolute;left:159.0px;top:269px;width:1px;height:27px;background:#d5d8d7"></div>
<div style="position:absolute;left:241.5px;top:269px;width:1px;height:27px;background:#d5d8d7"></div>
<div style="position:absolute;left:324.0px;top:269px;width:1px;height:27px;background:#d5d8d7"></div>
<div style="position:absolute;left:406.5px;top:269px;width:1px;height:27px;background:#d5d8d7"></div>
<div style="position:absolute;left:489.0px;top:269px;width:1px;height:27px;background:#d5d8d7"></div>
<div style="position:absolute;left:571.5px;top:269px;width:1px;height:27px;background:#d5d8d7"></div>
<div style="position:absolute;left:654.0px;top:269px;width:1px;height:27px;background:#d5d8d7"></div>
<div style="position:absolute;left:736.5px;top:269px;width:1px;height:27px;background:#d5d8d7"></div>
<div style="position:absolute;left:819.0px;top:269px;width:1px;height:27px;background:#d5d8d7"></div>
<div style="position:absolute;left:901.5px;top:269px;width:1px;height:27px;background:#d5d8d7"></div>
<div style="position:absolute;left:984.0px;top:269px;width:1px;height:27px;background:#d5d8d7"></div>
<div style="position:absolute;left:1066.5px;top:269px;width:1px;height:27px;background:#d5d8d7"></div>
<div style="position:absolute;left:1149.0px;top:269px;width:1px;height:27px;background:#d5d8d7"></div>
<div style="position:absolute;left:1259.0px;top:269px;width:1px;height:27px;background:#dcdbde"></div>
<div style="position:absolute;left:1369.0px;top:269px;width:1px;height:27px;background:#dcdbde"></div>
<div style="position:absolute;left:1479.0px;top:269px;width:1px;height:27px;background:#dcdbde"></div>
<div style="position:absolute;left:1589.0px;top:269px;width:1px;height:27px;background:#dcdbde"></div>
<div style="position:absolute;left:1699.0px;top:269px;width:1px;height:27px;background:#dcdbde"></div>
<div style="position:absolute;left:1809.0px;top:269px;width:1px;height:27px;background:#dcdbde"></div>
<div style="position:absolute;left:0px;top:269px;width:48px;height:28px;background:#fff;border-bottom:1px solid #d8d8da;box-sizing:border-box"></div>
<div style="position:absolute;left:48px;top:269px;width:3px;height:28px;background:#d9d8dc"></div>
<svg style="position:absolute;left:0px;top:269px" width="50" height="28" viewBox="0 0 50 28" fill="none"><circle cx="44" cy="5" r="1.25" fill="#8c8c8c"/><circle cx="38.5" cy="11" r="1.25" fill="#8c8c8c"/><circle cx="44" cy="11" r="1.25" fill="#8c8c8c"/><circle cx="33" cy="17" r="1.25" fill="#8c8c8c"/><circle cx="38.5" cy="17" r="1.25" fill="#8c8c8c"/><circle cx="44" cy="17" r="1.25" fill="#8c8c8c"/><circle cx="27.5" cy="22.5" r="1.25" fill="#8c8c8c"/><circle cx="33" cy="22.5" r="1.25" fill="#8c8c8c"/><circle cx="38.5" cy="22.5" r="1.25" fill="#8c8c8c"/><circle cx="44" cy="22.5" r="1.25" fill="#8c8c8c"/></svg>
<div style="position:absolute;left:0px;top:297px;width:49px;height:643px;background:#f2f0f3"></div>
<div style="position:absolute;left:0px;top:297px;width:49px;height:30px;background:#e8eae9"></div>
<div style="position:absolute;left:49px;top:297px;width:1px;height:643px;background:#d8d7da"></div>
<div style="position:absolute;left:0px;top:326.5px;width:49px;height:1px;background:#d8d7da"></div>
<div style="position:absolute;left:0px;top:356.5px;width:49px;height:1px;background:#d8d7da"></div>
<div style="position:absolute;left:0px;top:386.5px;width:49px;height:1px;background:#d8d7da"></div>
<div style="position:absolute;left:0px;top:416.5px;width:49px;height:1px;background:#d8d7da"></div>
<div style="position:absolute;left:0px;top:446.5px;width:49px;height:1px;background:#d8d7da"></div>
<div style="position:absolute;left:0px;top:476.5px;width:49px;height:1px;background:#d8d7da"></div>
<div style="position:absolute;left:0px;top:506.5px;width:49px;height:1px;background:#d8d7da"></div>
<div style="position:absolute;left:0px;top:536.5px;width:49px;height:1px;background:#d8d7da"></div>
<div style="position:absolute;left:0px;top:566.5px;width:49px;height:1px;background:#d8d7da"></div>
<div style="position:absolute;left:0px;top:596.5px;width:49px;height:1px;background:#d8d7da"></div>
<div style="position:absolute;left:0px;top:626.5px;width:49px;height:1px;background:#d8d7da"></div>
<div style="position:absolute;left:0px;top:656.5px;width:49px;height:1px;background:#d8d7da"></div>
<div style="position:absolute;left:0px;top:686.5px;width:49px;height:1px;background:#d8d7da"></div>
<div style="position:absolute;left:0px;top:716.5px;width:49px;height:1px;background:#d8d7da"></div>
<div style="position:absolute;left:0px;top:746.5px;width:49px;height:1px;background:#d8d7da"></div>
<div style="position:absolute;left:0px;top:776.5px;width:49px;height:1px;background:#d8d7da"></div>
<div style="position:absolute;left:0px;top:806.5px;width:49px;height:1px;background:#d8d7da"></div>
<div style="position:absolute;left:0px;top:836.5px;width:49px;height:1px;background:#d8d7da"></div>
<div style="position:absolute;left:0px;top:866.5px;width:49px;height:1px;background:#d8d7da"></div>
<div style="position:absolute;left:0px;top:896.5px;width:49px;height:1px;background:#d8d7da"></div>
<div style="position:absolute;left:0px;top:926.5px;width:49px;height:1px;background:#d8d7da"></div>
<div style="position:absolute;left:0px;top:956.5px;width:49px;height:1px;background:#d8d7da"></div>
<div style="position:absolute;left:50px;top:356.5px;width:1100px;height:1px;background:#fff"></div>
<div style="position:absolute;left:50px;top:386.5px;width:1100px;height:1px;background:#fff"></div>
<div style="position:absolute;left:50px;top:416.5px;width:1100px;height:1px;background:#fff"></div>
<div style="position:absolute;left:50px;top:446.5px;width:1100px;height:1px;background:#fff"></div>
<div style="position:absolute;left:50px;top:476.5px;width:1100px;height:1px;background:#fff"></div>
<div style="position:absolute;left:50px;top:506.5px;width:1100px;height:1px;background:#fff"></div>
<div style="position:absolute;left:50px;top:536.5px;width:1100px;height:1px;background:#fff"></div>
<div style="position:absolute;left:50px;top:566.5px;width:1100px;height:1px;background:#fff"></div>
<div style="position:absolute;left:50px;top:596.5px;width:1100px;height:1px;background:#fff"></div>
<div style="position:absolute;left:50px;top:626.5px;width:1100px;height:1px;background:#fff"></div>
<div style="position:absolute;left:50px;top:656.5px;width:1100px;height:1px;background:#fff"></div>
<div style="position:absolute;left:50px;top:686.5px;width:1100px;height:1px;background:#fff"></div>
<div style="position:absolute;left:50px;top:716.5px;width:1100px;height:1px;background:#fff"></div>
<div style="position:absolute;left:50px;top:746.5px;width:1100px;height:1px;background:#fff"></div>
<div style="position:absolute;left:50px;top:776.5px;width:1100px;height:1px;background:#fff"></div>
<div style="position:absolute;left:50px;top:806.5px;width:1100px;height:1px;background:#fff"></div>
<div style="position:absolute;left:50px;top:836.5px;width:1100px;height:1px;background:#fff"></div>
<div style="position:absolute;left:50px;top:866.5px;width:1100px;height:1px;background:#fff"></div>
<div style="position:absolute;left:50px;top:896.5px;width:1100px;height:1px;background:#fff"></div>
<div style="position:absolute;left:50px;top:926.5px;width:1100px;height:1px;background:#fff"></div>
<div style="position:absolute;left:50px;top:956.5px;width:1100px;height:1px;background:#fff"></div>
<div class="t" style="left:75.5px;width:60px;text-align:center;top:275px;font-size:16.5px;color:#222">A</div>
<div class="t" style="left:171.75px;width:60px;text-align:center;top:275px;font-size:16.5px;color:#222">B</div>
<div class="t" style="left:254.25px;width:60px;text-align:center;top:275px;font-size:16.5px;color:#222">C</div>
<div class="t" style="left:336.75px;width:60px;text-align:center;top:275px;font-size:16.5px;color:#222">D</div>
<div class="t" style="left:419.25px;width:60px;text-align:center;top:275px;font-size:16.5px;color:#222">E</div>
<div class="t" style="left:501.75px;width:60px;text-align:center;top:275px;font-size:16.5px;color:#222">F</div>
<div class="t" style="left:584.25px;width:60px;text-align:center;top:275px;font-size:16.5px;color:#222">G</div>
<div class="t" style="left:666.75px;width:60px;text-align:center;top:275px;font-size:16.5px;color:#222">H</div>
<div class="t" style="left:749.25px;width:60px;text-align:center;top:275px;font-size:16.5px;color:#222">I</div>
<div class="t" style="left:831.75px;width:60px;text-align:center;top:275px;font-size:16.5px;color:#222">J</div>
<div class="t" style="left:914.25px;width:60px;text-align:center;top:275px;font-size:16.5px;color:#222">K</div>
<div class="t" style="left:996.75px;width:60px;text-align:center;top:275px;font-size:16.5px;color:#222">L</div>
<div class="t" style="left:1079.25px;width:60px;text-align:center;top:275px;font-size:16.5px;color:#222">M</div>
<div class="t" style="left:1175.5px;width:60px;text-align:center;top:275px;font-size:16.5px;color:#222">N</div>
<div class="t" style="left:1285.5px;width:60px;text-align:center;top:275px;font-size:16.5px;color:#222">O</div>
<div class="t" style="left:1395.5px;width:60px;text-align:center;top:275px;font-size:16.5px;color:#222">P</div>
<div class="t" style="left:1505.5px;width:60px;text-align:center;top:275px;font-size:16.5px;color:#222">Q</div>
<div class="t" style="left:1615.5px;width:60px;text-align:center;top:275px;font-size:16.5px;color:#222">R</div>
<div class="t" style="left:1725.5px;width:60px;text-align:center;top:275px;font-size:16.5px;color:#222">S</div>
<div class="t" style="left:1835.5px;width:60px;text-align:center;top:275px;font-size:16.5px;color:#222">T</div>
<div class="t" style="left:1.5px;width:49px;text-align:center;top:303px;font-size:16.5px;color:#222">1</div>
<div class="t" style="left:1.5px;width:49px;text-align:center;top:333px;font-size:16.5px;color:#222">2</div>
<div class="t" style="left:1.5px;width:49px;text-align:center;top:363px;font-size:16.5px;color:#222">3</div>
<div class="t" style="left:1.5px;width:49px;text-align:center;top:393px;font-size:16.5px;color:#222">4</div>
<div class="t" style="left:1.5px;width:49px;text-align:center;top:423px;font-size:16.5px;color:#222">5</div>
<div class="t" style="left:1.5px;width:49px;text-align:center;top:453px;font-size:16.5px;color:#222">6</div>
<div class="t" style="left:1.5px;width:49px;text-align:center;top:483px;font-size:16.5px;color:#222">7</div>
<div class="t" style="left:1.5px;width:49px;text-align:center;top:513px;font-size:16.5px;color:#222">8</div>
<div class="t" style="left:1.5px;width:49px;text-align:center;top:543px;font-size:16.5px;color:#222">9</div>
<div class="t" style="left:1.5px;width:49px;text-align:center;top:573px;font-size:16.5px;color:#222">10</div>
<div class="t" style="left:1.5px;width:49px;text-align:center;top:603px;font-size:16.5px;color:#222">11</div>
<div class="t" style="left:1.5px;width:49px;text-align:center;top:633px;font-size:16.5px;color:#222">12</div>
<div class="t" style="left:1.5px;width:49px;text-align:center;top:663px;font-size:16.5px;color:#222">13</div>
<div class="t" style="left:1.5px;width:49px;text-align:center;top:693px;font-size:16.5px;color:#222">14</div>
<div class="t" style="left:1.5px;width:49px;text-align:center;top:723px;font-size:16.5px;color:#222">15</div>
<div class="t" style="left:1.5px;width:49px;text-align:center;top:753px;font-size:16.5px;color:#222">16</div>
<div class="t" style="left:1.5px;width:49px;text-align:center;top:783px;font-size:16.5px;color:#222">17</div>
<div class="t" style="left:1.5px;width:49px;text-align:center;top:813px;font-size:16.5px;color:#222">18</div>
<div class="t" style="left:1.5px;width:49px;text-align:center;top:843px;font-size:16.5px;color:#222">19</div>
<div class="t" style="left:1.5px;width:49px;text-align:center;top:873px;font-size:16.5px;color:#222">20</div>
<div class="t" style="left:1.5px;width:49px;text-align:center;top:903px;font-size:16.5px;color:#222">21</div>
<div class="t" style="left:1.5px;width:49px;text-align:center;top:933px;font-size:16.5px;color:#222">22</div>
<div style="position:absolute;left:50px;top:297px;width:1100px;height:30px;background:#fff"></div>
<div style="position:absolute;left:53px;top:301px;width:106px;height:26px;background:#908d70"></div>
<div style="position:absolute;left:160px;top:301px;width:989px;height:26px;background:#879370"></div>
<div style="position:absolute;left:159.0px;top:300px;width:1px;height:27px;background:#111"></div>
<div style="position:absolute;left:241.5px;top:300px;width:1px;height:27px;background:#111"></div>
<div style="position:absolute;left:324.0px;top:300px;width:1px;height:27px;background:#111"></div>
<div style="position:absolute;left:406.5px;top:300px;width:1px;height:27px;background:#111"></div>
<div style="position:absolute;left:489.0px;top:300px;width:1px;height:27px;background:#111"></div>
<div style="position:absolute;left:571.5px;top:300px;width:1px;height:27px;background:#111"></div>
<div style="position:absolute;left:654.0px;top:300px;width:1px;height:27px;background:#111"></div>
<div style="position:absolute;left:736.5px;top:300px;width:1px;height:27px;background:#111"></div>
<div style="position:absolute;left:819.0px;top:300px;width:1px;height:27px;background:#111"></div>
<div style="position:absolute;left:901.5px;top:300px;width:1px;height:27px;background:#111"></div>
<div style="position:absolute;left:984.0px;top:300px;width:1px;height:27px;background:#111"></div>
<div style="position:absolute;left:1066.5px;top:300px;width:1px;height:27px;background:#111"></div>
<div class="t" style="left:54.5px;width:100px;text-align:center;top:304px;font-size:16px;font-weight:700;letter-spacing:-0.3px;color:#f4f6f0">Product</div>
<div class="t" style="left:150.75px;width:100px;text-align:center;top:304px;font-size:16px;font-weight:700;letter-spacing:-0.3px;color:#f4f6f0">Jan</div>
<div class="t" style="left:233.25px;width:100px;text-align:center;top:304px;font-size:16px;font-weight:700;letter-spacing:-0.3px;color:#f4f6f0">Feb</div>
<div class="t" style="left:315.75px;width:100px;text-align:center;top:304px;font-size:16px;font-weight:700;letter-spacing:-0.3px;color:#f4f6f0">Mar</div>
<div class="t" style="left:398.25px;width:100px;text-align:center;top:304px;font-size:16px;font-weight:700;letter-spacing:-0.3px;color:#f4f6f0">Apr</div>
<div class="t" style="left:480.75px;width:100px;text-align:center;top:304px;font-size:16px;font-weight:700;letter-spacing:-0.3px;color:#f4f6f0">May</div>
<div class="t" style="left:563.25px;width:100px;text-align:center;top:304px;font-size:16px;font-weight:700;letter-spacing:-0.3px;color:#f4f6f0">Jun</div>
<div class="t" style="left:645.75px;width:100px;text-align:center;top:304px;font-size:16px;font-weight:700;letter-spacing:-0.3px;color:#f4f6f0">Jul</div>
<div class="t" style="left:728.25px;width:100px;text-align:center;top:304px;font-size:16px;font-weight:700;letter-spacing:-0.3px;color:#f4f6f0">Aug</div>
<div class="t" style="left:810.75px;width:100px;text-align:center;top:304px;font-size:16px;font-weight:700;letter-spacing:-0.3px;color:#f4f6f0">Sep</div>
<div class="t" style="left:893.25px;width:100px;text-align:center;top:304px;font-size:16px;font-weight:700;letter-spacing:-0.3px;color:#f4f6f0">Oct</div>
<div class="t" style="left:975.75px;width:100px;text-align:center;top:304px;font-size:16px;font-weight:700;letter-spacing:-0.3px;color:#f4f6f0">Nov</div>
<div class="t" style="left:1058.25px;width:100px;text-align:center;top:304px;font-size:16px;font-weight:700;letter-spacing:-0.3px;color:#f4f6f0">Dec</div>
<div style="position:absolute;left:50px;top:298px;width:1102px;height:32px;box-sizing:border-box;border:2px solid #3daf5e"></div>
<div style="position:absolute;left:1147px;top:324.5px;width:9px;height:9px;border-radius:50%;background:#3daf5e"></div>
<div style="position:absolute;left:0;top:0;width:1867px;height:940px;overflow:hidden"><div class="t" style="left:65.3px;width:80px;text-align:center;top:333px;font-size:16.3px;letter-spacing:0.4px;color:#1e1e1e">A</div><div class="t" style="left:161.55px;width:80px;text-align:center;top:333px;font-size:16.3px;letter-spacing:0.4px;color:#1e1e1e">120</div><div class="t" style="left:244.05px;width:80px;text-align:center;top:333px;font-size:16.3px;letter-spacing:0.4px;color:#1e1e1e">135</div><div class="t" style="left:326.55px;width:80px;text-align:center;top:333px;font-size:16.3px;letter-spacing:0.4px;color:#1e1e1e">150</div><div class="t" style="left:409.05px;width:80px;text-align:center;top:333px;font-size:16.3px;letter-spacing:0.4px;color:#1e1e1e">145</div><div class="t" style="left:491.55px;width:80px;text-align:center;top:333px;font-size:16.3px;letter-spacing:0.4px;color:#1e1e1e">160</div><div class="t" style="left:574.05px;width:80px;text-align:center;top:333px;font-size:16.3px;letter-spacing:0.4px;color:#1e1e1e">170</div><div class="t" style="left:656.55px;width:80px;text-align:center;top:333px;font-size:16.3px;letter-spacing:0.4px;color:#1e1e1e">165</div><div class="t" style="left:739.05px;width:80px;text-align:center;top:333px;font-size:16.3px;letter-spacing:0.4px;color:#1e1e1e">180</div><div class="t" style="left:821.55px;width:80px;text-align:center;top:333px;font-size:16.3px;letter-spacing:0.4px;color:#1e1e1e">190</div><div class="t" style="left:904.05px;width:80px;text-align:center;top:333px;font-size:16.3px;letter-spacing:0.4px;color:#1e1e1e">200</div><div class="t" style="left:986.55px;width:80px;text-align:center;top:333px;font-size:16.3px;letter-spacing:0.4px;color:#1e1e1e">195</div><div class="t" style="left:1069.05px;width:80px;text-align:center;top:333px;font-size:16.3px;letter-spacing:0.4px;color:#1e1e1e">210</div><div class="t" style="left:65.3px;width:80px;text-align:center;top:363px;font-size:16.3px;letter-spacing:0.4px;color:#1e1e1e">B</div><div class="t" style="left:161.55px;width:80px;text-align:center;top:363px;font-size:16.3px;letter-spacing:0.4px;color:#1e1e1e">80</div><div class="t" style="left:244.05px;width:80px;text-align:center;top:363px;font-size:16.3px;letter-spacing:0.4px;color:#1e1e1e">90</div><div class="t" style="left:326.55px;width:80px;text-align:center;top:363px;font-size:16.3px;letter-spacing:0.4px;color:#1e1e1e">85</div><div class="t" style="left:409.05px;width:80px;text-align:center;top:363px;font-size:16.3px;letter-spacing:0.4px;color:#1e1e1e">95</div><div class="t" style="left:491.55px;width:80px;text-align:center;top:363px;font-size:16.3px;letter-spacing:0.4px;color:#1e1e1e">100</div><div class="t" style="left:574.05px;width:80px;text-align:center;top:363px;font-size:16.3px;letter-spacing:0.4px;color:#1e1e1e">105</div><div class="t" style="left:656.55px;width:80px;text-align:center;top:363px;font-size:16.3px;letter-spacing:0.4px;color:#1e1e1e">110</div><div class="t" style="left:739.05px;width:80px;text-align:center;top:363px;font-size:16.3px;letter-spacing:0.4px;color:#1e1e1e">108</div><div class="t" style="left:821.55px;width:80px;text-align:center;top:363px;font-size:16.3px;letter-spacing:0.4px;color:#1e1e1e">115</div><div class="t" style="left:904.05px;width:80px;text-align:center;top:363px;font-size:16.3px;letter-spacing:0.4px;color:#1e1e1e">120</div><div class="t" style="left:986.55px;width:80px;text-align:center;top:363px;font-size:16.3px;letter-spacing:0.4px;color:#1e1e1e">118</div><div class="t" style="left:1069.05px;width:80px;text-align:center;top:363px;font-size:16.3px;letter-spacing:0.4px;color:#1e1e1e">125</div><div class="t" style="left:65.3px;width:80px;text-align:center;top:393px;font-size:16.3px;letter-spacing:0.4px;color:#1e1e1e">C</div><div class="t" style="left:161.55px;width:80px;text-align:center;top:393px;font-size:16.3px;letter-spacing:0.4px;color:#1e1e1e">60</div><div class="t" style="left:244.05px;width:80px;text-align:center;top:393px;font-size:16.3px;letter-spacing:0.4px;color:#1e1e1e">65</div><div class="t" style="left:326.55px;width:80px;text-align:center;top:393px;font-size:16.3px;letter-spacing:0.4px;color:#1e1e1e">70</div><div class="t" style="left:409.05px;width:80px;text-align:center;top:393px;font-size:16.3px;letter-spacing:0.4px;color:#1e1e1e">68</div><div class="t" style="left:491.55px;width:80px;text-align:center;top:393px;font-size:16.3px;letter-spacing:0.4px;color:#1e1e1e">72</div><div class="t" style="left:574.05px;width:80px;text-align:center;top:393px;font-size:16.3px;letter-spacing:0.4px;color:#1e1e1e">75</div><div class="t" style="left:656.55px;width:80px;text-align:center;top:393px;font-size:16.3px;letter-spacing:0.4px;color:#1e1e1e">78</div><div class="t" style="left:739.05px;width:80px;text-align:center;top:393px;font-size:16.3px;letter-spacing:0.4px;color:#1e1e1e">80</div><div class="t" style="left:821.55px;width:80px;text-align:center;top:393px;font-size:16.3px;letter-spacing:0.4px;color:#1e1e1e">83</div><div class="t" style="left:904.05px;width:80px;text-align:center;top:393px;font-size:16.3px;letter-spacing:0.4px;color:#1e1e1e">85</div><div class="t" style="left:986.55px;width:80px;text-align:center;top:393px;font-size:16.3px;letter-spacing:0.4px;color:#1e1e1e">88</div><div class="t" style="left:1069.05px;width:80px;text-align:center;top:393px;font-size:16.3px;letter-spacing:0.4px;color:#1e1e1e">90</div><div class="t" style="left:65.3px;width:80px;text-align:center;top:423px;font-size:16.3px;letter-spacing:0.4px;color:#1e1e1e">D</div><div class="t" style="left:161.55px;width:80px;text-align:center;top:423px;font-size:16.3px;letter-spacing:0.4px;color:#1e1e1e">120</div><div class="t" style="left:244.05px;width:80px;text-align:center;top:423px;font-size:16.3px;letter-spacing:0.4px;color:#1e1e1e">135</div><div class="t" style="left:326.55px;width:80px;text-align:center;top:423px;font-size:16.3px;letter-spacing:0.4px;color:#1e1e1e">150</div><div class="t" style="left:409.05px;width:80px;text-align:center;top:423px;font-size:16.3px;letter-spacing:0.4px;color:#1e1e1e">145</div><div class="t" style="left:491.55px;width:80px;text-align:center;top:423px;font-size:16.3px;letter-spacing:0.4px;color:#1e1e1e">160</div><div class="t" style="left:574.05px;width:80px;text-align:center;top:423px;font-size:16.3px;letter-spacing:0.4px;color:#1e1e1e">170</div><div class="t" style="left:656.55px;width:80px;text-align:center;top:423px;font-size:16.3px;letter-spacing:0.4px;color:#1e1e1e">165</div><div class="t" style="left:739.05px;width:80px;text-align:center;top:423px;font-size:16.3px;letter-spacing:0.4px;color:#1e1e1e">180</div><div class="t" style="left:821.55px;width:80px;text-align:center;top:423px;font-size:16.3px;letter-spacing:0.4px;color:#1e1e1e">190</div><div class="t" style="left:904.05px;width:80px;text-align:center;top:423px;font-size:16.3px;letter-spacing:0.4px;color:#1e1e1e">200</div><div class="t" style="left:986.55px;width:80px;text-align:center;top:423px;font-size:16.3px;letter-spacing:0.4px;color:#1e1e1e">195</div><div class="t" style="left:1069.05px;width:80px;text-align:center;top:423px;font-size:16.3px;letter-spacing:0.4px;color:#1e1e1e">210</div><div class="t" style="left:65.3px;width:80px;text-align:center;top:453px;font-size:16.3px;letter-spacing:0.4px;color:#1e1e1e">E</div><div class="t" style="left:161.55px;width:80px;text-align:center;top:453px;font-size:16.3px;letter-spacing:0.4px;color:#1e1e1e">80</div><div class="t" style="left:244.05px;width:80px;text-align:center;top:453px;font-size:16.3px;letter-spacing:0.4px;color:#1e1e1e">90</div><div class="t" style="left:326.55px;width:80px;text-align:center;top:453px;font-size:16.3px;letter-spacing:0.4px;color:#1e1e1e">85</div><div class="t" style="left:409.05px;width:80px;text-align:center;top:453px;font-size:16.3px;letter-spacing:0.4px;color:#1e1e1e">95</div><div class="t" style="left:491.55px;width:80px;text-align:center;top:453px;font-size:16.3px;letter-spacing:0.4px;color:#1e1e1e">100</div><div class="t" style="left:574.05px;width:80px;text-align:center;top:453px;font-size:16.3px;letter-spacing:0.4px;color:#1e1e1e">105</div><div class="t" style="left:656.55px;width:80px;text-align:center;top:453px;font-size:16.3px;letter-spacing:0.4px;color:#1e1e1e">110</div><div class="t" style="left:739.05px;width:80px;text-align:center;top:453px;font-size:16.3px;letter-spacing:0.4px;color:#1e1e1e">108</div><div class="t" style="left:821.55px;width:80px;text-align:center;top:453px;font-size:16.3px;letter-spacing:0.4px;color:#1e1e1e">115</div><div class="t" style="left:904.05px;width:80px;text-align:center;top:453px;font-size:16.3px;letter-spacing:0.4px;color:#1e1e1e">120</div><div class="t" style="left:986.55px;width:80px;text-align:center;top:453px;font-size:16.3px;letter-spacing:0.4px;color:#1e1e1e">118</div><div class="t" style="left:1069.05px;width:80px;text-align:center;top:453px;font-size:16.3px;letter-spacing:0.4px;color:#1e1e1e">125</div><div class="t" style="left:65.3px;width:80px;text-align:center;top:483px;font-size:16.3px;letter-spacing:0.4px;color:#1e1e1e">F</div><div class="t" style="left:161.55px;width:80px;text-align:center;top:483px;font-size:16.3px;letter-spacing:0.4px;color:#1e1e1e">60</div><div class="t" style="left:244.05px;width:80px;text-align:center;top:483px;font-size:16.3px;letter-spacing:0.4px;color:#1e1e1e">65</div><div class="t" style="left:326.55px;width:80px;text-align:center;top:483px;font-size:16.3px;letter-spacing:0.4px;color:#1e1e1e">70</div><div class="t" style="left:409.05px;width:80px;text-align:center;top:483px;font-size:16.3px;letter-spacing:0.4px;color:#1e1e1e">68</div><div class="t" style="left:491.55px;width:80px;text-align:center;top:483px;font-size:16.3px;letter-spacing:0.4px;color:#1e1e1e">72</div><div class="t" style="left:574.05px;width:80px;text-align:center;top:483px;font-size:16.3px;letter-spacing:0.4px;color:#1e1e1e">75</div><div class="t" style="left:656.55px;width:80px;text-align:center;top:483px;font-size:16.3px;letter-spacing:0.4px;color:#1e1e1e">78</div><div class="t" style="left:739.05px;width:80px;text-align:center;top:483px;font-size:16.3px;letter-spacing:0.4px;color:#1e1e1e">80</div><div class="t" style="left:821.55px;width:80px;text-align:center;top:483px;font-size:16.3px;letter-spacing:0.4px;color:#1e1e1e">83</div><div class="t" style="left:904.05px;width:80px;text-align:center;top:483px;font-size:16.3px;letter-spacing:0.4px;color:#1e1e1e">85</div><div class="t" style="left:986.55px;width:80px;text-align:center;top:483px;font-size:16.3px;letter-spacing:0.4px;color:#1e1e1e">88</div><div class="t" style="left:1069.05px;width:80px;text-align:center;top:483px;font-size:16.3px;letter-spacing:0.4px;color:#1e1e1e">90</div><div class="t" style="left:65.3px;width:80px;text-align:center;top:513px;font-size:16.3px;letter-spacing:0.4px;color:#1e1e1e">G</div><div class="t" style="left:161.55px;width:80px;text-align:center;top:513px;font-size:16.3px;letter-spacing:0.4px;color:#1e1e1e">120</div><div class="t" style="left:244.05px;width:80px;text-align:center;top:513px;font-size:16.3px;letter-spacing:0.4px;color:#1e1e1e">135</div><div class="t" style="left:326.55px;width:80px;text-align:center;top:513px;font-size:16.3px;letter-spacing:0.4px;color:#1e1e1e">150</div><div class="t" style="left:409.05px;width:80px;text-align:center;top:513px;font-size:16.3px;letter-spacing:0.4px;color:#1e1e1e">145</div><div class="t" style="left:491.55px;width:80px;text-align:center;top:513px;font-size:16.3px;letter-spacing:0.4px;color:#1e1e1e">160</div><div class="t" style="left:574.05px;width:80px;text-align:center;top:513px;font-size:16.3px;letter-spacing:0.4px;color:#1e1e1e">170</div><div class="t" style="left:656.55px;width:80px;text-align:center;top:513px;font-size:16.3px;letter-spacing:0.4px;color:#1e1e1e">165</div><div class="t" style="left:739.05px;width:80px;text-align:center;top:513px;font-size:16.3px;letter-spacing:0.4px;color:#1e1e1e">180</div><div class="t" style="left:821.55px;width:80px;text-align:center;top:513px;font-size:16.3px;letter-spacing:0.4px;color:#1e1e1e">190</div><div class="t" style="left:904.05px;width:80px;text-align:center;top:513px;font-size:16.3px;letter-spacing:0.4px;color:#1e1e1e">200</div><div class="t" style="left:986.55px;width:80px;text-align:center;top:513px;font-size:16.3px;letter-spacing:0.4px;color:#1e1e1e">195</div><div class="t" style="left:1069.05px;width:80px;text-align:center;top:513px;font-size:16.3px;letter-spacing:0.4px;color:#1e1e1e">210</div><div class="t" style="left:65.3px;width:80px;text-align:center;top:543px;font-size:16.3px;letter-spacing:0.4px;color:#1e1e1e">H</div><div class="t" style="left:161.55px;width:80px;text-align:center;top:543px;font-size:16.3px;letter-spacing:0.4px;color:#1e1e1e">80</div><div class="t" style="left:244.05px;width:80px;text-align:center;top:543px;font-size:16.3px;letter-spacing:0.4px;color:#1e1e1e">90</div><div class="t" style="left:326.55px;width:80px;text-align:center;top:543px;font-size:16.3px;letter-spacing:0.4px;color:#1e1e1e">85</div><div class="t" style="left:409.05px;width:80px;text-align:center;top:543px;font-size:16.3px;letter-spacing:0.4px;color:#1e1e1e">95</div><div class="t" style="left:491.55px;width:80px;text-align:center;top:543px;font-size:16.3px;letter-spacing:0.4px;color:#1e1e1e">100</div><div class="t" style="left:574.05px;width:80px;text-align:center;top:543px;font-size:16.3px;letter-spacing:0.4px;color:#1e1e1e">105</div><div class="t" style="left:656.55px;width:80px;text-align:center;top:543px;font-size:16.3px;letter-spacing:0.4px;color:#1e1e1e">110</div><div class="t" style="left:739.05px;width:80px;text-align:center;top:543px;font-size:16.3px;letter-spacing:0.4px;color:#1e1e1e">108</div><div class="t" style="left:821.55px;width:80px;text-align:center;top:543px;font-size:16.3px;letter-spacing:0.4px;color:#1e1e1e">115</div><div class="t" style="left:904.05px;width:80px;text-align:center;top:543px;font-size:16.3px;letter-spacing:0.4px;color:#1e1e1e">120</div><div class="t" style="left:986.55px;width:80px;text-align:center;top:543px;font-size:16.3px;letter-spacing:0.4px;color:#1e1e1e">118</div><div class="t" style="left:1069.05px;width:80px;text-align:center;top:543px;font-size:16.3px;letter-spacing:0.4px;color:#1e1e1e">125</div><div class="t" style="left:65.3px;width:80px;text-align:center;top:573px;font-size:16.3px;letter-spacing:0.4px;color:#1e1e1e">I</div><div class="t" style="left:161.55px;width:80px;text-align:center;top:573px;font-size:16.3px;letter-spacing:0.4px;color:#1e1e1e">60</div><div class="t" style="left:244.05px;width:80px;text-align:center;top:573px;font-size:16.3px;letter-spacing:0.4px;color:#1e1e1e">65</div><div class="t" style="left:326.55px;width:80px;text-align:center;top:573px;font-size:16.3px;letter-spacing:0.4px;color:#1e1e1e">70</div><div class="t" style="left:409.05px;width:80px;text-align:center;top:573px;font-size:16.3px;letter-spacing:0.4px;color:#1e1e1e">68</div><div class="t" style="left:491.55px;width:80px;text-align:center;top:573px;font-size:16.3px;letter-spacing:0.4px;color:#1e1e1e">72</div><div class="t" style="left:574.05px;width:80px;text-align:center;top:573px;font-size:16.3px;letter-spacing:0.4px;color:#1e1e1e">75</div><div class="t" style="left:656.55px;width:80px;text-align:center;top:573px;font-size:16.3px;letter-spacing:0.4px;color:#1e1e1e">78</div><div class="t" style="left:739.05px;width:80px;text-align:center;top:573px;font-size:16.3px;letter-spacing:0.4px;color:#1e1e1e">80</div><div class="t" style="left:821.55px;width:80px;text-align:center;top:573px;font-size:16.3px;letter-spacing:0.4px;color:#1e1e1e">83</div><div class="t" style="left:904.05px;width:80px;text-align:center;top:573px;font-size:16.3px;letter-spacing:0.4px;color:#1e1e1e">85</div><div class="t" style="left:986.55px;width:80px;text-align:center;top:573px;font-size:16.3px;letter-spacing:0.4px;color:#1e1e1e">88</div><div class="t" style="left:1069.05px;width:80px;text-align:center;top:573px;font-size:16.3px;letter-spacing:0.4px;color:#1e1e1e">90</div><div class="t" style="left:65.3px;width:80px;text-align:center;top:603px;font-size:16.3px;letter-spacing:0.4px;color:#1e1e1e">J</div><div class="t" style="left:161.55px;width:80px;text-align:center;top:603px;font-size:16.3px;letter-spacing:0.4px;color:#1e1e1e">120</div><div class="t" style="left:244.05px;width:80px;text-align:center;top:603px;font-size:16.3px;letter-spacing:0.4px;color:#1e1e1e">135</div><div class="t" style="left:326.55px;width:80px;text-align:center;top:603px;font-size:16.3px;letter-spacing:0.4px;color:#1e1e1e">150</div><div class="t" style="left:409.05px;width:80px;text-align:center;top:603px;font-size:16.3px;letter-spacing:0.4px;color:#1e1e1e">145</div><div class="t" style="left:491.55px;width:80px;text-align:center;top:603px;font-size:16.3px;letter-spacing:0.4px;color:#1e1e1e">160</div><div class="t" style="left:574.05px;width:80px;text-align:center;top:603px;font-size:16.3px;letter-spacing:0.4px;color:#1e1e1e">170</div><div class="t" style="left:656.55px;width:80px;text-align:center;top:603px;font-size:16.3px;letter-spacing:0.4px;color:#1e1e1e">165</div><div class="t" style="left:739.05px;width:80px;text-align:center;top:603px;font-size:16.3px;letter-spacing:0.4px;color:#1e1e1e">180</div><div class="t" style="left:821.55px;width:80px;text-align:center;top:603px;font-size:16.3px;letter-spacing:0.4px;color:#1e1e1e">190</div><div class="t" style="left:904.05px;width:80px;text-align:center;top:603px;font-size:16.3px;letter-spacing:0.4px;color:#1e1e1e">200</div><div class="t" style="left:986.55px;width:80px;text-align:center;top:603px;font-size:16.3px;letter-spacing:0.4px;color:#1e1e1e">195</div><div class="t" style="left:1069.05px;width:80px;text-align:center;top:603px;font-size:16.3px;letter-spacing:0.4px;color:#1e1e1e">210</div><div class="t" style="left:65.3px;width:80px;text-align:center;top:633px;font-size:16.3px;letter-spacing:0.4px;color:#1e1e1e">K</div><div class="t" style="left:161.55px;width:80px;text-align:center;top:633px;font-size:16.3px;letter-spacing:0.4px;color:#1e1e1e">80</div><div class="t" style="left:244.05px;width:80px;text-align:center;top:633px;font-size:16.3px;letter-spacing:0.4px;color:#1e1e1e">90</div><div class="t" style="left:326.55px;width:80px;text-align:center;top:633px;font-size:16.3px;letter-spacing:0.4px;color:#1e1e1e">85</div><div class="t" style="left:409.05px;width:80px;text-align:center;top:633px;font-size:16.3px;letter-spacing:0.4px;color:#1e1e1e">95</div><div class="t" style="left:491.55px;width:80px;text-align:center;top:633px;font-size:16.3px;letter-spacing:0.4px;color:#1e1e1e">100</div><div class="t" style="left:574.05px;width:80px;text-align:center;top:633px;font-size:16.3px;letter-spacing:0.4px;color:#1e1e1e">105</div><div class="t" style="left:656.55px;width:80px;text-align:center;top:633px;font-size:16.3px;letter-spacing:0.4px;color:#1e1e1e">110</div><div class="t" style="left:739.05px;width:80px;text-align:center;top:633px;font-size:16.3px;letter-spacing:0.4px;color:#1e1e1e">108</div><div class="t" style="left:821.55px;width:80px;text-align:center;top:633px;font-size:16.3px;letter-spacing:0.4px;color:#1e1e1e">115</div><div class="t" style="left:904.05px;width:80px;text-align:center;top:633px;font-size:16.3px;letter-spacing:0.4px;color:#1e1e1e">120</div><div class="t" style="left:986.55px;width:80px;text-align:center;top:633px;font-size:16.3px;letter-spacing:0.4px;color:#1e1e1e">118</div><div class="t" style="left:1069.05px;width:80px;text-align:center;top:633px;font-size:16.3px;letter-spacing:0.4px;color:#1e1e1e">125</div><div class="t" style="left:65.3px;width:80px;text-align:center;top:663px;font-size:16.3px;letter-spacing:0.4px;color:#1e1e1e">L</div><div class="t" style="left:161.55px;width:80px;text-align:center;top:663px;font-size:16.3px;letter-spacing:0.4px;color:#1e1e1e">60</div><div class="t" style="left:244.05px;width:80px;text-align:center;top:663px;font-size:16.3px;letter-spacing:0.4px;color:#1e1e1e">65</div><div class="t" style="left:326.55px;width:80px;text-align:center;top:663px;font-size:16.3px;letter-spacing:0.4px;color:#1e1e1e">70</div><div class="t" style="left:409.05px;width:80px;text-align:center;top:663px;font-size:16.3px;letter-spacing:0.4px;color:#1e1e1e">68</div><div class="t" style="left:491.55px;width:80px;text-align:center;top:663px;font-size:16.3px;letter-spacing:0.4px;color:#1e1e1e">72</div><div class="t" style="left:574.05px;width:80px;text-align:center;top:663px;font-size:16.3px;letter-spacing:0.4px;color:#1e1e1e">75</div><div class="t" style="left:656.55px;width:80px;text-align:center;top:663px;font-size:16.3px;letter-spacing:0.4px;color:#1e1e1e">78</div><div class="t" style="left:739.05px;width:80px;text-align:center;top:663px;font-size:16.3px;letter-spacing:0.4px;color:#1e1e1e">80</div><div class="t" style="left:821.55px;width:80px;text-align:center;top:663px;font-size:16.3px;letter-spacing:0.4px;color:#1e1e1e">83</div><div class="t" style="left:904.05px;width:80px;text-align:center;top:663px;font-size:16.3px;letter-spacing:0.4px;color:#1e1e1e">85</div><div class="t" style="left:986.55px;width:80px;text-align:center;top:663px;font-size:16.3px;letter-spacing:0.4px;color:#1e1e1e">88</div><div class="t" style="left:1069.05px;width:80px;text-align:center;top:663px;font-size:16.3px;letter-spacing:0.4px;color:#1e1e1e">90</div><div class="t" style="left:65.3px;width:80px;text-align:center;top:693px;font-size:16.3px;letter-spacing:0.4px;color:#1e1e1e">M</div><div class="t" style="left:161.55px;width:80px;text-align:center;top:693px;font-size:16.3px;letter-spacing:0.4px;color:#1e1e1e">120</div><div class="t" style="left:244.05px;width:80px;text-align:center;top:693px;font-size:16.3px;letter-spacing:0.4px;color:#1e1e1e">135</div><div class="t" style="left:326.55px;width:80px;text-align:center;top:693px;font-size:16.3px;letter-spacing:0.4px;color:#1e1e1e">150</div><div class="t" style="left:409.05px;width:80px;text-align:center;top:693px;font-size:16.3px;letter-spacing:0.4px;color:#1e1e1e">145</div><div class="t" style="left:491.55px;width:80px;text-align:center;top:693px;font-size:16.3px;letter-spacing:0.4px;color:#1e1e1e">160</div><div class="t" style="left:574.05px;width:80px;text-align:center;top:693px;font-size:16.3px;letter-spacing:0.4px;color:#1e1e1e">170</div><div class="t" style="left:656.55px;width:80px;text-align:center;top:693px;font-size:16.3px;letter-spacing:0.4px;color:#1e1e1e">165</div><div class="t" style="left:739.05px;width:80px;text-align:center;top:693px;font-size:16.3px;letter-spacing:0.4px;color:#1e1e1e">180</div><div class="t" style="left:821.55px;width:80px;text-align:center;top:693px;font-size:16.3px;letter-spacing:0.4px;color:#1e1e1e">190</div><div class="t" style="left:904.05px;width:80px;text-align:center;top:693px;font-size:16.3px;letter-spacing:0.4px;color:#1e1e1e">200</div><div class="t" style="left:986.55px;width:80px;text-align:center;top:693px;font-size:16.3px;letter-spacing:0.4px;color:#1e1e1e">195</div><div class="t" style="left:1069.05px;width:80px;text-align:center;top:693px;font-size:16.3px;letter-spacing:0.4px;color:#1e1e1e">210</div><div class="t" style="left:65.3px;width:80px;text-align:center;top:723px;font-size:16.3px;letter-spacing:0.4px;color:#1e1e1e">N</div><div class="t" style="left:161.55px;width:80px;text-align:center;top:723px;font-size:16.3px;letter-spacing:0.4px;color:#1e1e1e">80</div><div class="t" style="left:244.05px;width:80px;text-align:center;top:723px;font-size:16.3px;letter-spacing:0.4px;color:#1e1e1e">90</div><div class="t" style="left:326.55px;width:80px;text-align:center;top:723px;font-size:16.3px;letter-spacing:0.4px;color:#1e1e1e">85</div><div class="t" style="left:409.05px;width:80px;text-align:center;top:723px;font-size:16.3px;letter-spacing:0.4px;color:#1e1e1e">95</div><div class="t" style="left:491.55px;width:80px;text-align:center;top:723px;font-size:16.3px;letter-spacing:0.4px;color:#1e1e1e">100</div><div class="t" style="left:574.05px;width:80px;text-align:center;top:723px;font-size:16.3px;letter-spacing:0.4px;color:#1e1e1e">105</div><div class="t" style="left:656.55px;width:80px;text-align:center;top:723px;font-size:16.3px;letter-spacing:0.4px;color:#1e1e1e">110</div><div class="t" style="left:739.05px;width:80px;text-align:center;top:723px;font-size:16.3px;letter-spacing:0.4px;color:#1e1e1e">108</div><div class="t" style="left:821.55px;width:80px;text-align:center;top:723px;font-size:16.3px;letter-spacing:0.4px;color:#1e1e1e">115</div><div class="t" style="left:904.05px;width:80px;text-align:center;top:723px;font-size:16.3px;letter-spacing:0.4px;color:#1e1e1e">120</div><div class="t" style="left:986.55px;width:80px;text-align:center;top:723px;font-size:16.3px;letter-spacing:0.4px;color:#1e1e1e">118</div><div class="t" style="left:1069.05px;width:80px;text-align:center;top:723px;font-size:16.3px;letter-spacing:0.4px;color:#1e1e1e">125</div><div class="t" style="left:65.3px;width:80px;text-align:center;top:753px;font-size:16.3px;letter-spacing:0.4px;color:#1e1e1e">O</div><div class="t" style="left:161.55px;width:80px;text-align:center;top:753px;font-size:16.3px;letter-spacing:0.4px;color:#1e1e1e">120</div><div class="t" style="left:244.05px;width:80px;text-align:center;top:753px;font-size:16.3px;letter-spacing:0.4px;color:#1e1e1e">135</div><div class="t" style="left:326.55px;width:80px;text-align:center;top:753px;font-size:16.3px;letter-spacing:0.4px;color:#1e1e1e">150</div><div class="t" style="left:409.05px;width:80px;text-align:center;top:753px;font-size:16.3px;letter-spacing:0.4px;color:#1e1e1e">145</div><div class="t" style="left:491.55px;width:80px;text-align:center;top:753px;font-size:16.3px;letter-spacing:0.4px;color:#1e1e1e">160</div><div class="t" style="left:574.05px;width:80px;text-align:center;top:753px;font-size:16.3px;letter-spacing:0.4px;color:#1e1e1e">170</div><div class="t" style="left:656.55px;width:80px;text-align:center;top:753px;font-size:16.3px;letter-spacing:0.4px;color:#1e1e1e">165</div><div class="t" style="left:739.05px;width:80px;text-align:center;top:753px;font-size:16.3px;letter-spacing:0.4px;color:#1e1e1e">180</div><div class="t" style="left:821.55px;width:80px;text-align:center;top:753px;font-size:16.3px;letter-spacing:0.4px;color:#1e1e1e">190</div><div class="t" style="left:904.05px;width:80px;text-align:center;top:753px;font-size:16.3px;letter-spacing:0.4px;color:#1e1e1e">200</div><div class="t" style="left:986.55px;width:80px;text-align:center;top:753px;font-size:16.3px;letter-spacing:0.4px;color:#1e1e1e">195</div><div class="t" style="left:1069.05px;width:80px;text-align:center;top:753px;font-size:16.3px;letter-spacing:0.4px;color:#1e1e1e">210</div><div class="t" style="left:65.3px;width:80px;text-align:center;top:783px;font-size:16.3px;letter-spacing:0.4px;color:#1e1e1e">B</div><div class="t" style="left:161.55px;width:80px;text-align:center;top:783px;font-size:16.3px;letter-spacing:0.4px;color:#1e1e1e">80</div><div class="t" style="left:244.05px;width:80px;text-align:center;top:783px;font-size:16.3px;letter-spacing:0.4px;color:#1e1e1e">90</div><div class="t" style="left:326.55px;width:80px;text-align:center;top:783px;font-size:16.3px;letter-spacing:0.4px;color:#1e1e1e">85</div><div class="t" style="left:409.05px;width:80px;text-align:center;top:783px;font-size:16.3px;letter-spacing:0.4px;color:#1e1e1e">95</div><div class="t" style="left:491.55px;width:80px;text-align:center;top:783px;font-size:16.3px;letter-spacing:0.4px;color:#1e1e1e">100</div><div class="t" style="left:574.05px;width:80px;text-align:center;top:783px;font-size:16.3px;letter-spacing:0.4px;color:#1e1e1e">105</div><div class="t" style="left:656.55px;width:80px;text-align:center;top:783px;font-size:16.3px;letter-spacing:0.4px;color:#1e1e1e">110</div><div class="t" style="left:739.05px;width:80px;text-align:center;top:783px;font-size:16.3px;letter-spacing:0.4px;color:#1e1e1e">108</div><div class="t" style="left:821.55px;width:80px;text-align:center;top:783px;font-size:16.3px;letter-spacing:0.4px;color:#1e1e1e">115</div><div class="t" style="left:904.05px;width:80px;text-align:center;top:783px;font-size:16.3px;letter-spacing:0.4px;color:#1e1e1e">120</div><div class="t" style="left:986.55px;width:80px;text-align:center;top:783px;font-size:16.3px;letter-spacing:0.4px;color:#1e1e1e">118</div><div class="t" style="left:1069.05px;width:80px;text-align:center;top:783px;font-size:16.3px;letter-spacing:0.4px;color:#1e1e1e">125</div><div class="t" style="left:65.3px;width:80px;text-align:center;top:813px;font-size:16.3px;letter-spacing:0.4px;color:#1e1e1e">C</div><div class="t" style="left:161.55px;width:80px;text-align:center;top:813px;font-size:16.3px;letter-spacing:0.4px;color:#1e1e1e">60</div><div class="t" style="left:244.05px;width:80px;text-align:center;top:813px;font-size:16.3px;letter-spacing:0.4px;color:#1e1e1e">65</div><div class="t" style="left:326.55px;width:80px;text-align:center;top:813px;font-size:16.3px;letter-spacing:0.4px;color:#1e1e1e">70</div><div class="t" style="left:409.05px;width:80px;text-align:center;top:813px;font-size:16.3px;letter-spacing:0.4px;color:#1e1e1e">68</div><div class="t" style="left:491.55px;width:80px;text-align:center;top:813px;font-size:16.3px;letter-spacing:0.4px;color:#1e1e1e">72</div><div class="t" style="left:574.05px;width:80px;text-align:center;top:813px;font-size:16.3px;letter-spacing:0.4px;color:#1e1e1e">75</div><div class="t" style="left:656.55px;width:80px;text-align:center;top:813px;font-size:16.3px;letter-spacing:0.4px;color:#1e1e1e">78</div><div class="t" style="left:739.05px;width:80px;text-align:center;top:813px;font-size:16.3px;letter-spacing:0.4px;color:#1e1e1e">80</div><div class="t" style="left:821.55px;width:80px;text-align:center;top:813px;font-size:16.3px;letter-spacing:0.4px;color:#1e1e1e">83</div><div class="t" style="left:904.05px;width:80px;text-align:center;top:813px;font-size:16.3px;letter-spacing:0.4px;color:#1e1e1e">85</div><div class="t" style="left:986.55px;width:80px;text-align:center;top:813px;font-size:16.3px;letter-spacing:0.4px;color:#1e1e1e">88</div><div class="t" style="left:1069.05px;width:80px;text-align:center;top:813px;font-size:16.3px;letter-spacing:0.4px;color:#1e1e1e">90</div><div class="t" style="left:65.3px;width:80px;text-align:center;top:843px;font-size:16.3px;letter-spacing:0.4px;color:#1e1e1e">D</div><div class="t" style="left:161.55px;width:80px;text-align:center;top:843px;font-size:16.3px;letter-spacing:0.4px;color:#1e1e1e">120</div><div class="t" style="left:244.05px;width:80px;text-align:center;top:843px;font-size:16.3px;letter-spacing:0.4px;color:#1e1e1e">135</div><div class="t" style="left:326.55px;width:80px;text-align:center;top:843px;font-size:16.3px;letter-spacing:0.4px;color:#1e1e1e">150</div><div class="t" style="left:409.05px;width:80px;text-align:center;top:843px;font-size:16.3px;letter-spacing:0.4px;color:#1e1e1e">145</div><div class="t" style="left:491.55px;width:80px;text-align:center;top:843px;font-size:16.3px;letter-spacing:0.4px;color:#1e1e1e">160</div><div class="t" style="left:574.05px;width:80px;text-align:center;top:843px;font-size:16.3px;letter-spacing:0.4px;color:#1e1e1e">170</div><div class="t" style="left:656.55px;width:80px;text-align:center;top:843px;font-size:16.3px;letter-spacing:0.4px;color:#1e1e1e">165</div><div class="t" style="left:739.05px;width:80px;text-align:center;top:843px;font-size:16.3px;letter-spacing:0.4px;color:#1e1e1e">180</div><div class="t" style="left:821.55px;width:80px;text-align:center;top:843px;font-size:16.3px;letter-spacing:0.4px;color:#1e1e1e">190</div><div class="t" style="left:904.05px;width:80px;text-align:center;top:843px;font-size:16.3px;letter-spacing:0.4px;color:#1e1e1e">200</div><div class="t" style="left:986.55px;width:80px;text-align:center;top:843px;font-size:16.3px;letter-spacing:0.4px;color:#1e1e1e">195</div><div class="t" style="left:1069.05px;width:80px;text-align:center;top:843px;font-size:16.3px;letter-spacing:0.4px;color:#1e1e1e">210</div><div class="t" style="left:65.3px;width:80px;text-align:center;top:873px;font-size:16.3px;letter-spacing:0.4px;color:#1e1e1e">E</div><div class="t" style="left:161.55px;width:80px;text-align:center;top:873px;font-size:16.3px;letter-spacing:0.4px;color:#1e1e1e">80</div><div class="t" style="left:244.05px;width:80px;text-align:center;top:873px;font-size:16.3px;letter-spacing:0.4px;color:#1e1e1e">90</div><div class="t" style="left:326.55px;width:80px;text-align:center;top:873px;font-size:16.3px;letter-spacing:0.4px;color:#1e1e1e">85</div><div class="t" style="left:409.05px;width:80px;text-align:center;top:873px;font-size:16.3px;letter-spacing:0.4px;color:#1e1e1e">95</div><div class="t" style="left:491.55px;width:80px;text-align:center;top:873px;font-size:16.3px;letter-spacing:0.4px;color:#1e1e1e">100</div><div class="t" style="left:574.05px;width:80px;text-align:center;top:873px;font-size:16.3px;letter-spacing:0.4px;color:#1e1e1e">105</div><div class="t" style="left:656.55px;width:80px;text-align:center;top:873px;font-size:16.3px;letter-spacing:0.4px;color:#1e1e1e">110</div><div class="t" style="left:739.05px;width:80px;text-align:center;top:873px;font-size:16.3px;letter-spacing:0.4px;color:#1e1e1e">108</div><div class="t" style="left:821.55px;width:80px;text-align:center;top:873px;font-size:16.3px;letter-spacing:0.4px;color:#1e1e1e">115</div><div class="t" style="left:904.05px;width:80px;text-align:center;top:873px;font-size:16.3px;letter-spacing:0.4px;color:#1e1e1e">120</div><div class="t" style="left:986.55px;width:80px;text-align:center;top:873px;font-size:16.3px;letter-spacing:0.4px;color:#1e1e1e">118</div><div class="t" style="left:1069.05px;width:80px;text-align:center;top:873px;font-size:16.3px;letter-spacing:0.4px;color:#1e1e1e">125</div><div class="t" style="left:65.3px;width:80px;text-align:center;top:903px;font-size:16.3px;letter-spacing:0.4px;color:#1e1e1e">F</div><div class="t" style="left:161.55px;width:80px;text-align:center;top:903px;font-size:16.3px;letter-spacing:0.4px;color:#1e1e1e">60</div><div class="t" style="left:244.05px;width:80px;text-align:center;top:903px;font-size:16.3px;letter-spacing:0.4px;color:#1e1e1e">65</div><div class="t" style="left:326.55px;width:80px;text-align:center;top:903px;font-size:16.3px;letter-spacing:0.4px;color:#1e1e1e">70</div><div class="t" style="left:409.05px;width:80px;text-align:center;top:903px;font-size:16.3px;letter-spacing:0.4px;color:#1e1e1e">68</div><div class="t" style="left:491.55px;width:80px;text-align:center;top:903px;font-size:16.3px;letter-spacing:0.4px;color:#1e1e1e">72</div><div class="t" style="left:574.05px;width:80px;text-align:center;top:903px;font-size:16.3px;letter-spacing:0.4px;color:#1e1e1e">75</div><div class="t" style="left:656.55px;width:80px;text-align:center;top:903px;font-size:16.3px;letter-spacing:0.4px;color:#1e1e1e">78</div><div class="t" style="left:739.05px;width:80px;text-align:center;top:903px;font-size:16.3px;letter-spacing:0.4px;color:#1e1e1e">80</div><div class="t" style="left:821.55px;width:80px;text-align:center;top:903px;font-size:16.3px;letter-spacing:0.4px;color:#1e1e1e">83</div><div class="t" style="left:904.05px;width:80px;text-align:center;top:903px;font-size:16.3px;letter-spacing:0.4px;color:#1e1e1e">85</div><div class="t" style="left:986.55px;width:80px;text-align:center;top:903px;font-size:16.3px;letter-spacing:0.4px;color:#1e1e1e">88</div><div class="t" style="left:1069.05px;width:80px;text-align:center;top:903px;font-size:16.3px;letter-spacing:0.4px;color:#1e1e1e">90</div><div class="t" style="left:65.3px;width:80px;text-align:center;top:933px;font-size:16.3px;letter-spacing:0.4px;color:#1e1e1e">G</div><div class="t" style="left:161.55px;width:80px;text-align:center;top:933px;font-size:16.3px;letter-spacing:0.4px;color:#1e1e1e">120</div><div class="t" style="left:244.05px;width:80px;text-align:center;top:933px;font-size:16.3px;letter-spacing:0.4px;color:#1e1e1e">135</div><div class="t" style="left:326.55px;width:80px;text-align:center;top:933px;font-size:16.3px;letter-spacing:0.4px;color:#1e1e1e">150</div><div class="t" style="left:409.05px;width:80px;text-align:center;top:933px;font-size:16.3px;letter-spacing:0.4px;color:#1e1e1e">145</div><div class="t" style="left:491.55px;width:80px;text-align:center;top:933px;font-size:16.3px;letter-spacing:0.4px;color:#1e1e1e">160</div><div class="t" style="left:574.05px;width:80px;text-align:center;top:933px;font-size:16.3px;letter-spacing:0.4px;color:#1e1e1e">170</div><div class="t" style="left:656.55px;width:80px;text-align:center;top:933px;font-size:16.3px;letter-spacing:0.4px;color:#1e1e1e">165</div><div class="t" style="left:739.05px;width:80px;text-align:center;top:933px;font-size:16.3px;letter-spacing:0.4px;color:#1e1e1e">180</div><div class="t" style="left:821.55px;width:80px;text-align:center;top:933px;font-size:16.3px;letter-spacing:0.4px;color:#1e1e1e">190</div><div class="t" style="left:904.05px;width:80px;text-align:center;top:933px;font-size:16.3px;letter-spacing:0.4px;color:#1e1e1e">200</div><div class="t" style="left:986.55px;width:80px;text-align:center;top:933px;font-size:16.3px;letter-spacing:0.4px;color:#1e1e1e">195</div><div class="t" style="left:1069.05px;width:80px;text-align:center;top:933px;font-size:16.3px;letter-spacing:0.4px;color:#1e1e1e">210</div></div>
<div style="position:absolute;left:1867px;top:269px;width:53px;height:711px;background:#f2f0f3"></div>
<div style="position:absolute;left:1866.5px;top:269px;width:1px;height:711px;background:#e4e3e6"></div>
<div style="position:absolute;left:1850px;top:297px;width:17px;height:625px;background:#fbfafc"></div>
<div style="position:absolute;left:1859px;top:314px;width:3px;height:503px;background:#8a8a8c;border-radius:2px"></div>
<div style="position:absolute;left:1149.5px;top:922px;width:698px;height:18px;background:#fbfafc"></div>
<div style="position:absolute;left:1848px;top:922px;width:19px;height:18px;background:#fff"></div>
<div style="position:absolute;left:70px;top:932px;width:1709px;height:3px;background:#868488;border-radius:2px"></div>
<svg style="position:absolute;left:1881px;top:285px" width="28" height="22" viewBox="0 0 28 22" fill="none"><path d="M2.5 5.5 H8.5 L2.5 17.5 Q2 18.5 3.5 18.5 Q7 18.5 10 16.5 Q13 14 17.5 7.5 Q18.5 6.5 19.5 7.5 L24.5 16 Q25 17.5 23 17.5 Q16 17.5 12 16" stroke="#333333" stroke-width="1.5" stroke-linejoin="round" stroke-linecap="round"/><circle cx="15.5" cy="3" r="1.3" fill="#333333"/></svg>
<div class="t" style="left:1885.70px;top:337.00px;font-size:25px;color:#333;letter-spacing:0.000px;">f</div>
<div class="t" style="left:1892.40px;top:346.00px;font-size:16px;color:#333;letter-spacing:0.000px;">x</div>
<svg style="position:absolute;left:1883px;top:391px" width="24" height="25" viewBox="0 0 24 25" fill="none"><path d="M2 2 H21 V17 H7 L2 22 Z" stroke="#333333" stroke-width="1.5" stroke-linejoin="round"/><path d="M6 7 H17 M6 11.5 H13" stroke="#333333" stroke-width="1.5"/></svg>
<div style="position:absolute;left:0px;top:940px;width:1867px;height:40px;background:#f8f6f9"></div>
<div style="position:absolute;left:0px;top:939.5px;width:1867px;height:1px;background:#e7e6ea"></div>
<svg style="position:absolute;left:17px;top:953px" width="16" height="11" viewBox="0 0 16 11" fill="none"><path d="M1.5 9.5 L8 2 L14.5 9.5 Z" fill="#444" stroke="#444" stroke-width="1.5" stroke-linejoin="round"/></svg>
<div style="position:absolute;left:52px;top:951px;width:16px;height:16px;background:#1aa64e;border-radius:2.5px"></div>
<svg style="position:absolute;left:52px;top:951px" width="16" height="16" viewBox="0 0 16 16" fill="none"><path d="M8 3.5 V12.5 M3.5 8 H12.5" stroke="#fff" stroke-width="2"/></svg>
<div style="position:absolute;left:213px;top:940px;width:1px;height:35px;background:#e2e1e5"></div>
<div style="position:absolute;left:385px;top:940px;width:1px;height:35px;background:#e2e1e5"></div>
<div style="position:absolute;left:571.5px;top:940px;width:1px;height:35px;background:#e2e1e5"></div>
<div style="position:absolute;left:733.5px;top:940px;width:1px;height:35px;background:#e2e1e5"></div>
<div style="position:absolute;left:829.5px;top:940px;width:1px;height:35px;background:#e2e1e5"></div>
<div style="position:absolute;left:969.5px;top:940px;width:1px;height:35px;background:#e2e1e5"></div>
<div style="position:absolute;left:1103.5px;top:940px;width:1px;height:35px;background:#e2e1e5"></div>
<div style="position:absolute;left:1402px;top:940px;width:1px;height:35px;background:#e2e1e5"></div>
<div style="position:absolute;left:1483px;top:940px;width:1px;height:35px;background:#e2e1e5"></div>
<div style="position:absolute;left:1582px;top:940px;width:1px;height:35px;background:#e2e1e5"></div>
<div style="position:absolute;left:1238px;top:939px;width:79.5px;height:35.5px;background:#fff;border-radius:0 0 9px 9px;border:1px solid #e6e5e9;border-top:none;box-sizing:border-box"></div>
<div class="t" style="left:101.80px;top:949.00px;font-size:15.5px;color:#333;letter-spacing:0.215px;">Hide gridlines</div>
<div class="t" style="left:227.60px;top:949.00px;font-size:15.5px;color:#333;letter-spacing:0.142px;">Insert delete column</div>
<div class="t" style="left:400.60px;top:949.00px;font-size:15.5px;color:#333;letter-spacing:-0.081px;">Insert delete column_1</div>
<div class="t" style="left:585.80px;top:949.00px;font-size:15.5px;color:#333;letter-spacing:0.065px;">Rotate text in a cell</div>
<div class="t" style="left:748.30px;top:949.00px;font-size:15.5px;color:#333;letter-spacing:-0.010px;">Shift cells</div>
<div class="t" style="left:845.70px;top:949.00px;font-size:15.5px;color:#333;letter-spacing:0.086px;">Text to columns</div>
<div class="t" style="left:985.30px;top:949.00px;font-size:15.5px;color:#333;letter-spacing:0.309px;">Groupungrpup</div>
<div class="t" style="left:1117.80px;top:949.00px;font-size:15.5px;color:#333;letter-spacing:-0.183px;">Freezecolumns</div>
<div class="t" style="left:1333.70px;top:949.00px;font-size:15.5px;color:#333;letter-spacing:-0.620px;">Themes</div>
<div class="t" style="left:1418.60px;top:949.00px;font-size:15.5px;color:#333;letter-spacing:0.480px;">Indent</div>
<div class="t" style="left:1500.00px;top:949.00px;font-size:15.5px;color:#333;letter-spacing:0.012px;">Wrap text</div>
<div class="t" style="left:1253.60px;top:949.00px;font-size:15.5px;color:#111;letter-spacing:-0.360px;font-weight:700;">Sheet2</div>
<div style="position:absolute;left:0px;top:980px;width:1920px;height:40px;background:#edebee"></div>
<div style="position:absolute;left:0px;top:980px;width:1920px;height:1px;background:#e2e0e3"></div>
<div style="position:absolute;left:1867px;top:940px;width:53px;height:40px;background:#f2f0f3"></div>
<div class="t" style="left:1362.30px;top:991.80px;font-size:14.5px;color:#555;letter-spacing:0.129px;">Count:13</div>
<div style="position:absolute;left:1434px;top:988px;width:1px;height:24px;background:#dcdbde"></div>
<div style="position:absolute;left:1458px;top:988px;width:1px;height:24px;background:#dcdbde"></div>
<div style="position:absolute;left:1507px;top:988px;width:1px;height:24px;background:#dcdbde"></div>
<div style="position:absolute;left:1556px;top:988px;width:1px;height:24px;background:#dcdbde"></div>
<div style="position:absolute;left:1604px;top:988px;width:1px;height:24px;background:#dcdbde"></div>
<svg style="position:absolute;left:1474px;top:991px" width="18" height="18" viewBox="0 0 18 18" fill="none"><rect x="1.7" y="1.5" width="14.8" height="15" rx="2.5" stroke="#555" stroke-width="1.4"/><path d="M9 3.8 L7.4 5.4 H10.6 Z M9 14.2 L7.4 12.6 H10.6 Z M4.3 9 L5.9 7.4 V10.6 Z M13.7 9 L12.1 7.4 V10.6 Z" fill="#555"/></svg>
<svg style="position:absolute;left:1520px;top:990px" width="25" height="20" viewBox="0 0 25 20" fill="none"><path d="M8 15 H3 Q1.5 15 1.5 13.5 V3.5 Q1.5 2 3 2 H19.5 Q21.3 2 21.3 3.5 V11" stroke="#555" stroke-width="1.3"/><circle cx="5.5" cy="5.8" r="1" fill="#666"/><circle cx="9.8" cy="5.8" r="1" fill="#666"/><circle cx="14" cy="5.8" r="1" fill="#666"/><circle cx="18.2" cy="5.8" r="1" fill="#666"/><circle cx="5.5" cy="9.6" r="1" fill="#666"/><circle cx="18.2" cy="9.6" r="1" fill="#666"/><path d="M8.3 9.6 H15.5" stroke="#666" stroke-width="1.4"/></svg>
<div class="t" style="left:1527.30px;top:998.00px;font-size:10.5px;color:#555;letter-spacing:-1.000px;">abc</div>
<svg style="position:absolute;left:1570px;top:990px" width="22" height="20" viewBox="0 0 22 20" fill="none"><path d="M7 16.5 H3 Q1.5 16.5 1.5 15 V3.5 Q1.5 2 3 2 H12.5 Q14 2 14 3.5 V7.5" stroke="#555" stroke-width="1.3"/><path d="M5 6 H10.5 M5 8.8 H7.5" stroke="#555" stroke-width="1.3"/><path d="M9.6 14 Q14.5 8.5 19.8 14 Q14.5 19.5 9.6 14 Z" fill="#edebee" stroke="#555" stroke-width="1.3"/><circle cx="14.7" cy="14" r="1.5" fill="#555"/></svg>
<div style="position:absolute;left:1622px;top:999px;width:12px;height:2px;background:#555"></div>
<div style="position:absolute;left:1652px;top:997.5px;width:141px;height:5px;background:#e2e1e4;border-radius:3px"></div>
<div style="position:absolute;left:1712px;top:990px;width:20px;height:20px;border-radius:50%;background:#fff;box-shadow:0 0 1px rgba(0,0,0,0.15)"></div>
<svg style="position:absolute;left:1809px;top:993px" width="15" height="15" viewBox="0 0 15 15" fill="none"><path d="M7.5 1 V14 M1 7.5 H14" stroke="#555" stroke-width="1.6"/></svg>
<div style="position:absolute;left:1840px;top:989.5px;width:54px;height:22px;box-sizing:border-box;border:1px solid #dfdee2;border-radius:4px;background:#fff"></div>
<div class="t" style="left:1844.10px;top:994.00px;font-size:12.5px;color:#222;letter-spacing:-0.900px;">100%</div>
<svg style="position:absolute;left:1875.5px;top:997.0px" width="10" height="6" viewBox="0 0 10 6" fill="none"><path d="M1 1 L5.0 5 L9 1" stroke="#666" stroke-width="1.1" stroke-linecap="round" stroke-linejoin="round"/></svg>
<svg style="position:absolute;left:88px;top:297px" width="24" height="24" viewBox="0 0 24 24" fill="none"><g transform="translate(-88 -297)"><path d="M97 301 H104 V306 H109 V313 H104 V318 H97 V313 H92 V306 H97 Z" fill="#000"/><path d="M95 299 H102 V304 H107 V311 H102 V316 H95 V311 H90 V304 H95 Z" fill="#000"/><path d="M96 300 H101 V305 H106 V310 H101 V315 H96 V310 H91 V305 H96 Z" fill="#fff"/></g></svg>
<svg style="position:absolute;left:1910px;top:1010px" width="10" height="10" viewBox="0 0 10 10" fill="none"><path d="M10 0 V10 H0 A10 10 0 0 0 10 0 Z" fill="#fff"/></svg>
</div></body></html>
